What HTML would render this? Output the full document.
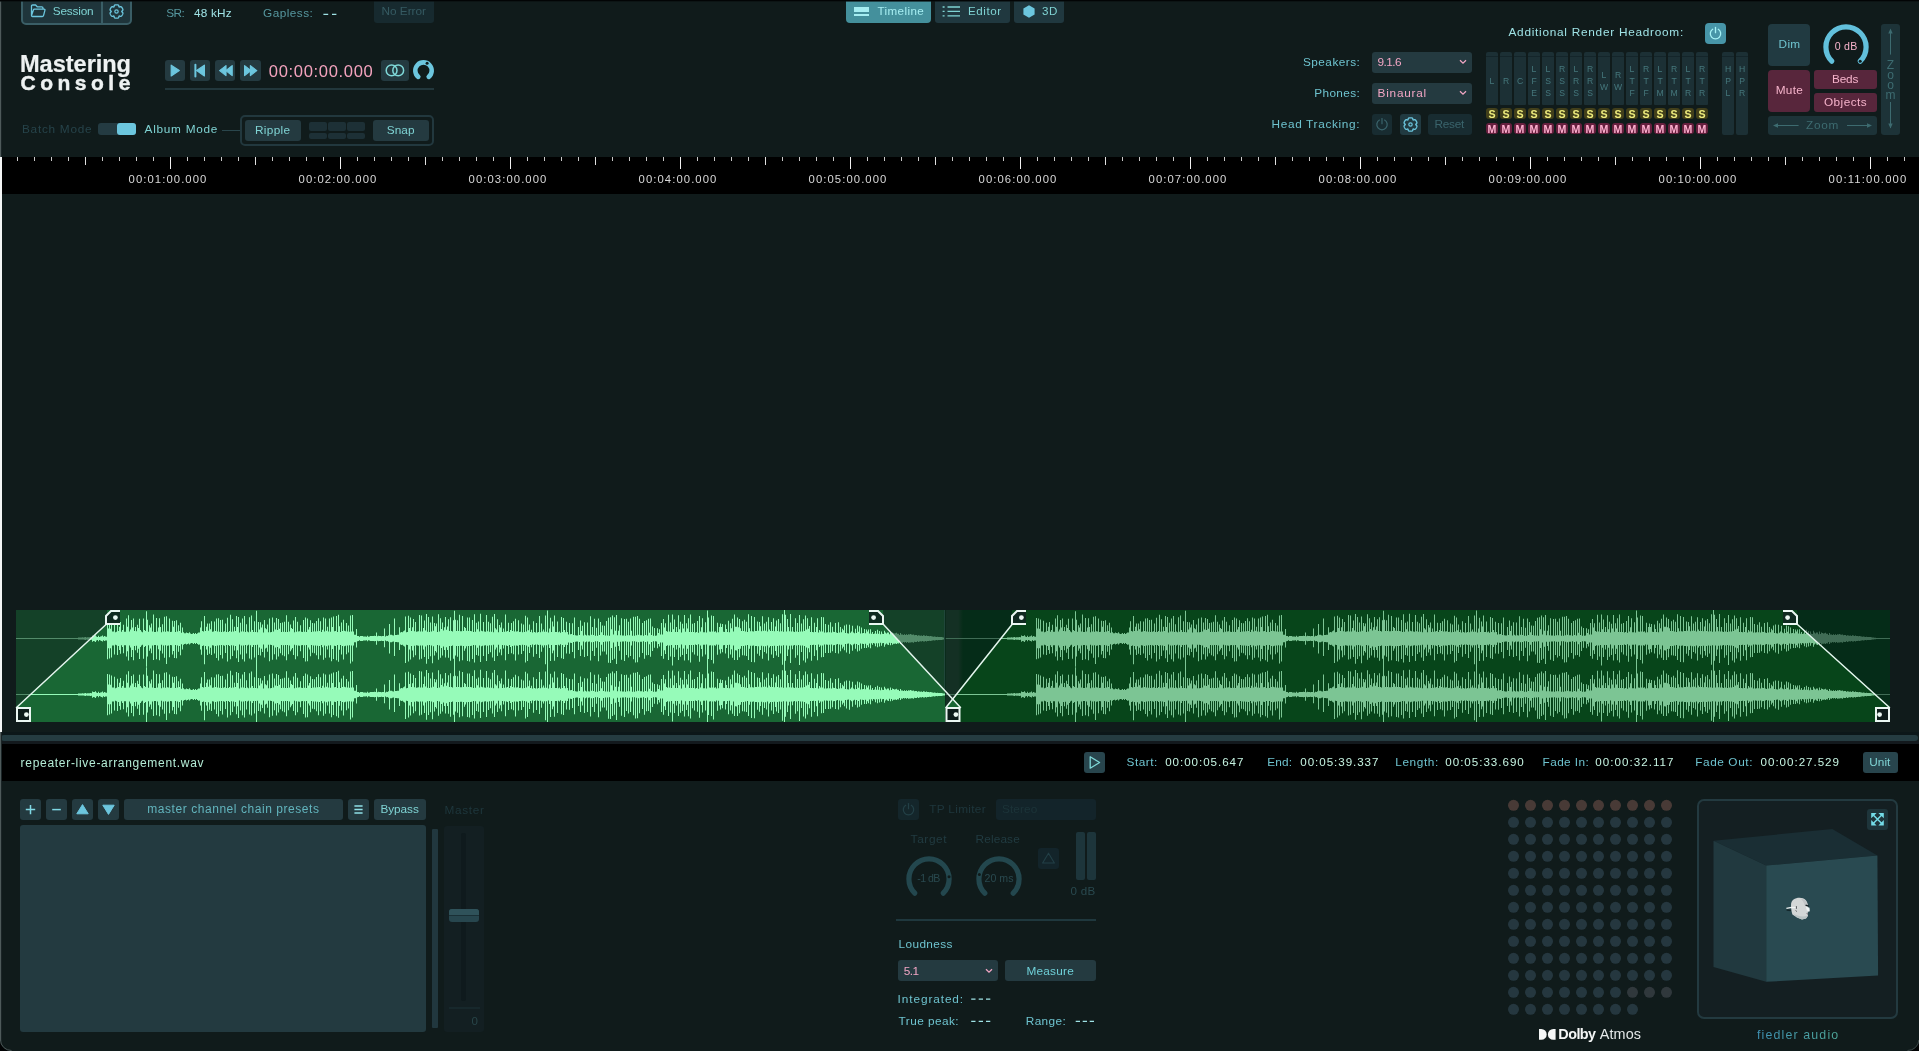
<!DOCTYPE html>
<html><head><meta charset="utf-8">
<style>
*{box-sizing:border-box;margin:0;padding:0}
html,body{width:1919px;height:1051px;overflow:hidden;background:#101b1b}
body{-webkit-font-smoothing:antialiased;font-family:"Liberation Sans",sans-serif;position:relative;color:#6ec3cf;font-size:12px}
.a{position:absolute}
.t{position:absolute;white-space:nowrap;line-height:1}
.btn{position:absolute;background:#243a40;border-radius:3px}
.c{display:flex;align-items:center;justify-content:center}
svg{position:absolute;overflow:visible}
#w{position:absolute;left:0;top:0;width:1919px;height:1051px;will-change:transform}
</style></head><body><div id="w">
<!-- left edge line -->

<!-- Session group -->
<div class="a" style="left:21px;top:-4px;width:111px;height:29px;border:2px solid #3a5e66;border-radius:5px;background:#1f353b"></div>
<div class="a" style="left:101px;top:0;width:2px;height:24px;background:#3a5e66"></div>
<svg style="left:30px;top:4px" width="16" height="14" viewBox="0 0 16 14"><path d="M1.5 11.5V2.2Q1.5 1 2.7 1H5.6L7.2 2.8H11.8Q13 2.8 13 4V5.2M1.5 11.5L3.3 6.2Q3.6 5.2 4.6 5.2H14Q15.2 5.2 14.9 6.3L13.6 11.4Q13.3 12.5 12.2 12.5H2.5Q1.5 12.5 1.5 11.5Z" fill="none" stroke="#6cc6de" stroke-width="1.3" stroke-linejoin="round"></path></svg>
<div class="t" style="left: 52.7px; top: 6.05px; font-size: 11.8px; color: rgb(127, 211, 211); letter-spacing: -0.18px;">Session</div>
<svg style="left:109px;top:4px" width="15" height="15" viewBox="-7.5 -7.5 15 15"><path id="gearp" d="M0.00 -6.70L0.35 -6.69L0.70 -6.66L1.05 -6.61L1.39 -6.54L1.72 -6.41L2.01 -6.18L2.23 -5.80L2.35 -5.29L2.44 -4.79L2.60 -4.50L2.93 -4.51L3.40 -4.68L3.91 -4.83L4.35 -4.83L4.69 -4.69L4.97 -4.47L5.20 -4.21L5.42 -3.94L5.62 -3.65L5.80 -3.35L5.97 -3.04L6.12 -2.72L6.25 -2.40L6.36 -2.07L6.41 -1.72L6.35 -1.35L6.13 -0.97L5.76 -0.61L5.37 -0.28L5.20 -0.00L5.37 0.28L5.76 0.61L6.13 0.97L6.35 1.35L6.41 1.72L6.36 2.07L6.25 2.40L6.12 2.72L5.97 3.04L5.80 3.35L5.62 3.65L5.42 3.94L5.20 4.21L4.97 4.47L4.69 4.69L4.35 4.83L3.91 4.83L3.40 4.68L2.93 4.51L2.60 4.50L2.44 4.79L2.35 5.29L2.23 5.80L2.01 6.18L1.72 6.41L1.39 6.54L1.05 6.61L0.70 6.66L0.35 6.69L0.00 6.70L-0.35 6.69L-0.70 6.66L-1.05 6.61L-1.39 6.54L-1.72 6.41L-2.01 6.18L-2.23 5.80L-2.35 5.29L-2.44 4.79L-2.60 4.50L-2.93 4.51L-3.40 4.68L-3.91 4.83L-4.35 4.83L-4.69 4.69L-4.97 4.47L-5.20 4.21L-5.42 3.94L-5.62 3.65L-5.80 3.35L-5.97 3.04L-6.12 2.72L-6.25 2.40L-6.36 2.07L-6.41 1.72L-6.35 1.35L-6.13 0.97L-5.76 0.61L-5.37 0.28L-5.20 0.00L-5.37 -0.28L-5.76 -0.61L-6.13 -0.97L-6.35 -1.35L-6.41 -1.72L-6.36 -2.07L-6.25 -2.40L-6.12 -2.72L-5.97 -3.04L-5.80 -3.35L-5.62 -3.65L-5.42 -3.94L-5.20 -4.21L-4.97 -4.47L-4.69 -4.69L-4.35 -4.83L-3.91 -4.83L-3.40 -4.68L-2.93 -4.51L-2.60 -4.50L-2.44 -4.79L-2.35 -5.29L-2.23 -5.80L-2.01 -6.18L-1.72 -6.41L-1.39 -6.54L-1.05 -6.61L-0.70 -6.66L-0.35 -6.69Z" fill="none" stroke="#6cc6de" stroke-width="1.35" stroke-linejoin="round"></path><circle r="1.7" fill="none" stroke="#6cc6de" stroke-width="1.2"></circle></svg>

<div class="t" style="left: 166.3px; top: 8.3px; font-size: 11.8px; color: rgb(86, 151, 159); letter-spacing: -0.55px;">SR:</div>
<div class="t" style="left: 194px; top: 8.3px; font-size: 11.8px; color: rgb(159, 227, 230); letter-spacing: 0.18px;">48 kHz</div>
<div class="t" style="left: 263px; top: 8.3px; font-size: 11.8px; color: rgb(86, 151, 159); letter-spacing: 0.46px;">Gapless:</div>
<svg style="left:0;top:0" width="400" height="30"><path d="M323.4 14.3h4.8m3.8 0h4.4" stroke="#9fe3e6" stroke-width="1.3"></path></svg>
<div class="a" style="left:374px;top:-2px;width:60px;height:25px;background:#172a2f;border-radius:3px"></div>
<div class="t" style="left: 381.5px; top: 5.95px; font-size: 11.8px; color: rgb(53, 90, 98); letter-spacing: -0.02px;">No Error</div>

<!-- Logo -->
<div class="t" style="left:20px;top:52.5px;font-size:23.6px;font-weight:bold;color:#eef2f2;letter-spacing:-0.05px;-webkit-text-stroke:0.2px #eef2f2">Mastering</div>
<div class="t" style="left:20.5px;top:71.7px;font-size:21px;font-weight:bold;color:#eef2f2;letter-spacing:4.5px;-webkit-text-stroke:0.45px #eef2f2">Console</div>

<!-- transport -->
<div class="btn" style="left:165px;top:60px;width:20px;height:21px"></div>
<div class="btn" style="left:190px;top:60px;width:20px;height:21px"></div>
<div class="btn" style="left:215px;top:60px;width:20px;height:21px"></div>
<div class="btn" style="left:240px;top:60px;width:21px;height:21px"></div>
<svg style="left:165px;top:60px" width="96" height="21" viewBox="0 0 96 21">
<g fill="#6cc6de" stroke="#6cc6de" stroke-width="1.2" stroke-linejoin="round">
<path d="M6.2 5.2V16L14.3 10.6Z"></path>
<path d="M39.4 5.2V16L31.6 10.6Z"></path><path d="M30.4 4.8V16.4" stroke-width="2" stroke-linecap="round"></path>
<path d="M61 5.6V15.6L54.6 10.6Z"></path><path d="M67.2 5.6V15.6L60.8 10.6Z"></path>
<path d="M79.6 5.6V15.6L86 10.6Z"></path><path d="M85.4 5.6V15.6L91.8 10.6Z"></path>
</g></svg>
<div class="t" style="left: 268.75px; top: 63.95px; font-size: 16.6px; color: rgb(244, 163, 190); letter-spacing: 0.65px;">00:00:00.000</div>
<div class="btn" style="left:381px;top:60px;width:28px;height:21px"></div>
<svg style="left:381px;top:60px" width="28" height="21" viewBox="0 0 28 21"><circle cx="10.6" cy="10.4" r="5.4" fill="none" stroke="#7fd8d8" stroke-width="1.5"></circle><circle cx="17.2" cy="10.4" r="5.4" fill="none" stroke="#7fd8d8" stroke-width="1.5"></circle></svg>
<svg style="left:412px;top:59px" width="23" height="23" viewBox="-11.5 -11.5 23 23"><path d="M-5.2 6.4A8.2 8.2 0 1 1 5.2 6.4" fill="none" stroke="#6cc6de" stroke-width="4.6" stroke-linecap="round"></path><circle cx="3.6" cy="-7.2" r="1.5" fill="#101b1b"></circle></svg>
<div class="a" style="left:165px;top:88px;width:269px;height:2px;background:#22373c"></div>

<!-- mode row -->
<div class="t" style="left: 22px; top: 124.2px; font-size: 11.8px; color: rgb(38, 67, 74); letter-spacing: 0.73px;">Batch Mode</div>
<div class="a" style="left:98px;top:123px;width:38px;height:12px;background:#243b42;border-radius:3px"></div>
<div class="a" style="left:117px;top:123px;width:19px;height:12px;background:#6cc6de;border-radius:3px"></div>
<div class="t" style="left: 144.6px; top: 124.2px; font-size: 11.8px; color: rgb(127, 211, 211); letter-spacing: 0.72px;">Album Mode</div>
<div class="a" style="left:222px;top:130px;width:19px;height:1px;background:#2a464c"></div>
<div class="a" style="left:240px;top:115px;width:194px;height:31px;border:2px solid #22383e;border-radius:5px;background:#101b1b"></div>
<div class="btn" style="left:245px;top:120px;width:56px;height:21px"></div>
<div class="t" style="font-size: 11.8px; color: rgb(127, 211, 211); letter-spacing: 0.32px; left: 255px; top: 125.2px;">Ripple</div>
<div class="btn" style="left:373px;top:120px;width:56px;height:21px"></div>
<div class="t" style="font-size: 11.8px; color: rgb(127, 211, 211); letter-spacing: 0.09px; left: 386.75px; top: 125.2px;">Snap</div>
<div class="a" style="left:309px;top:122px;width:18px;height:9px;background:#1d3036;border-radius:2px"></div>
<div class="a" style="left:328px;top:122px;width:18px;height:9px;background:#1d3036;border-radius:2px"></div>
<div class="a" style="left:347px;top:122px;width:18px;height:9px;background:#1d3036;border-radius:2px"></div>
<div class="a" style="left:309px;top:133px;width:18px;height:6px;background:#1d3036;border-radius:2px"></div>
<div class="a" style="left:328px;top:133px;width:18px;height:6px;background:#1d3036;border-radius:2px"></div>
<div class="a" style="left:347px;top:133px;width:18px;height:6px;background:#1d3036;border-radius:2px"></div>

<!-- tabs -->
<div class="a" style="left:846px;top:-3px;width:85px;height:26px;background:#44909c;border-radius:4px"></div>
<div class="a" style="left:854px;top:7px;width:15px;height:5px;background:#a6eef2"></div>
<div class="a" style="left:854px;top:14px;width:15px;height:2.4px;background:#a6eef2"></div>
<div class="t" style="left: 877.4px; top: 5.2px; font-size: 11.6px; color: rgb(166, 238, 242); letter-spacing: 0.42px;">Timeline</div>
<div class="a" style="left:935px;top:-3px;width:75px;height:26px;background:#20383f;border-radius:3px"></div>
<svg style="left:942px;top:6px" width="18" height="11" viewBox="0 0 18 11"><g stroke="#7fd3d3" stroke-width="1.3"><path d="M5.5 1H18M5.5 5.4H18M5.5 9.8H18"></path><path d="M0.6 1H2.6M0.6 5.4H2.6M0.6 9.8H2.6"></path></g></svg>
<div class="t" style="left: 968px; top: 5.2px; font-size: 11.6px; color: rgb(127, 211, 211); letter-spacing: 0.55px;">Editor</div>
<div class="a" style="left:1014px;top:-3px;width:50px;height:26px;background:#20383f;border-radius:3px"></div>
<svg style="left:1022px;top:5px" width="14" height="13" viewBox="0 0 14 13"><path d="M7 0.3L12.6 3.4V9.6L7 12.7L1.4 9.6V3.4Z" fill="#6cc6de"></path></svg>
<div class="t" style="left: 1042px; top: 5.2px; font-size: 11.6px; color: rgb(127, 211, 211); letter-spacing: 0.55px;">3D</div>

<!-- speakers/phones -->
<div class="t" style="font-size: 11.8px; color: rgb(110, 195, 207); letter-spacing: 0.46px; left: 1303px; top: 57px;">Speakers:</div>
<div class="t" style="font-size: 11.8px; color: rgb(110, 195, 207); letter-spacing: 0.36px; left: 1314.3px; top: 87.6px;">Phones:</div>
<div class="t" style="font-size: 11.8px; color: rgb(110, 195, 207); letter-spacing: 0.67px; left: 1271.5px; top: 118.6px;">Head Tracking:</div>
<div class="btn" style="left:1372px;top:52px;width:100px;height:21px"></div>
<div class="btn" style="left:1372px;top:83px;width:100px;height:21px"></div>
<div class="t" style="font-size: 11.8px; color: rgb(242, 166, 196); letter-spacing: -0.55px; left: 1377.5px; top: 57.4px;">9.1.6</div>
<div class="t" style="font-size: 11.8px; color: rgb(242, 166, 196); letter-spacing: 0.78px; left: 1377.5px; top: 88.3px;">Binaural</div>
<svg style="left:1459px;top:59px" width="8" height="6" viewBox="0 0 8 6"><path d="M1 1.2L4 4.2L7 1.2" fill="none" stroke="#f2a6c4" stroke-width="1.3"></path></svg>
<svg style="left:1459px;top:90px" width="8" height="6" viewBox="0 0 8 6"><path d="M1 1.2L4 4.2L7 1.2" fill="none" stroke="#f2a6c4" stroke-width="1.3"></path></svg>
<div class="btn" style="left:1372px;top:114px;width:20px;height:21px;background:#182c31"></div>
<svg style="left:1372px;top:114px" width="20" height="21" viewBox="-10 -10.5 20 21"><path d="M-2.6 -4.4A5.2 5.2 0 1 0 2.6 -4.4" fill="none" stroke="#3a646c" stroke-width="1.2" stroke-linecap="round"></path><path d="M0 -6V-0.8" stroke="#3a646c" stroke-width="1.2" stroke-linecap="round"></path></svg>
<div class="btn" style="left:1400px;top:114px;width:21px;height:21px;background:#213a41"></div>
<svg style="left:1403px;top:117px" width="15" height="15" viewBox="-7.5 -7.5 15 15"><path d="M0.00 -6.70L0.35 -6.69L0.70 -6.66L1.05 -6.61L1.39 -6.54L1.72 -6.41L2.01 -6.18L2.23 -5.80L2.35 -5.29L2.44 -4.79L2.60 -4.50L2.93 -4.51L3.40 -4.68L3.91 -4.83L4.35 -4.83L4.69 -4.69L4.97 -4.47L5.20 -4.21L5.42 -3.94L5.62 -3.65L5.80 -3.35L5.97 -3.04L6.12 -2.72L6.25 -2.40L6.36 -2.07L6.41 -1.72L6.35 -1.35L6.13 -0.97L5.76 -0.61L5.37 -0.28L5.20 -0.00L5.37 0.28L5.76 0.61L6.13 0.97L6.35 1.35L6.41 1.72L6.36 2.07L6.25 2.40L6.12 2.72L5.97 3.04L5.80 3.35L5.62 3.65L5.42 3.94L5.20 4.21L4.97 4.47L4.69 4.69L4.35 4.83L3.91 4.83L3.40 4.68L2.93 4.51L2.60 4.50L2.44 4.79L2.35 5.29L2.23 5.80L2.01 6.18L1.72 6.41L1.39 6.54L1.05 6.61L0.70 6.66L0.35 6.69L0.00 6.70L-0.35 6.69L-0.70 6.66L-1.05 6.61L-1.39 6.54L-1.72 6.41L-2.01 6.18L-2.23 5.80L-2.35 5.29L-2.44 4.79L-2.60 4.50L-2.93 4.51L-3.40 4.68L-3.91 4.83L-4.35 4.83L-4.69 4.69L-4.97 4.47L-5.20 4.21L-5.42 3.94L-5.62 3.65L-5.80 3.35L-5.97 3.04L-6.12 2.72L-6.25 2.40L-6.36 2.07L-6.41 1.72L-6.35 1.35L-6.13 0.97L-5.76 0.61L-5.37 0.28L-5.20 0.00L-5.37 -0.28L-5.76 -0.61L-6.13 -0.97L-6.35 -1.35L-6.41 -1.72L-6.36 -2.07L-6.25 -2.40L-6.12 -2.72L-5.97 -3.04L-5.80 -3.35L-5.62 -3.65L-5.42 -3.94L-5.20 -4.21L-4.97 -4.47L-4.69 -4.69L-4.35 -4.83L-3.91 -4.83L-3.40 -4.68L-2.93 -4.51L-2.60 -4.50L-2.44 -4.79L-2.35 -5.29L-2.23 -5.80L-2.01 -6.18L-1.72 -6.41L-1.39 -6.54L-1.05 -6.61L-0.70 -6.66L-0.35 -6.69Z" fill="none" stroke="#6cc6de" stroke-width="1.35" stroke-linejoin="round"></path><circle r="1.7" fill="none" stroke="#6cc6de" stroke-width="1.2"></circle></svg>
<div class="btn" style="left:1428px;top:114px;width:44px;height:21px;background:#182c31"></div>
<div class="t" style="font-size: 11.8px; color: rgb(58, 100, 108); letter-spacing: -0.23px; left: 1434.4px; top: 118.95px;">Reset</div>
<div class="t" style="font-size: 11.8px; color: rgb(159, 227, 230); letter-spacing: 0.74px; left: 1508.5px; top: 27.3px;">Additional Render Headroom:</div>
<div class="a" style="left:1705px;top:23px;width:21px;height:21px;background:#4795a8;border-radius:4px"></div>
<svg style="left:1705px;top:23px" width="21" height="21" viewBox="-10.5 -10.5 21 21"><path d="M-2.8 -4.2A5.2 5.2 0 1 0 2.8 -4.2" fill="none" stroke="#a6f2f6" stroke-width="1.3" stroke-linecap="round"></path><path d="M0 -6V-0.8" stroke="#a6f2f6" stroke-width="1.3" stroke-linecap="round"></path></svg>
<div class="a" style="left:1486px;top:52px;width:12px;height:53px;background:#1c3035;border-radius:2px 2px 1px 1px"></div>
<div class="a" style="left:1486px;top:56px;width:12px;height:1px;background:#14252a"></div>
<div class="a c" style="left:1484px;top:75.1px;width:16px;flex-direction:column;font-size:8.6px;line-height:12px;color:#45777c"><span>L</span></div>
<div class="a c" style="left:1486px;top:108px;width:12px;height:11px;background:#423f1a;border-radius:3px;font-size:10.6px;color:#eeec7c;font-weight:bold">S</div>
<div class="a c" style="left:1486px;top:123px;width:12px;height:11px;background:#661f3e;border-radius:3px;font-size:10.6px;color:#ffb0d0;font-weight:bold">M</div>
<div class="a" style="left:1500px;top:52px;width:12px;height:53px;background:#1c3035;border-radius:2px 2px 1px 1px"></div>
<div class="a" style="left:1500px;top:56px;width:12px;height:1px;background:#14252a"></div>
<div class="a c" style="left:1498px;top:75.1px;width:16px;flex-direction:column;font-size:8.6px;line-height:12px;color:#45777c"><span>R</span></div>
<div class="a c" style="left:1500px;top:108px;width:12px;height:11px;background:#423f1a;border-radius:3px;font-size:10.6px;color:#eeec7c;font-weight:bold">S</div>
<div class="a c" style="left:1500px;top:123px;width:12px;height:11px;background:#661f3e;border-radius:3px;font-size:10.6px;color:#ffb0d0;font-weight:bold">M</div>
<div class="a" style="left:1514px;top:52px;width:12px;height:53px;background:#1c3035;border-radius:2px 2px 1px 1px"></div>
<div class="a" style="left:1514px;top:56px;width:12px;height:1px;background:#14252a"></div>
<div class="a c" style="left:1512px;top:75.1px;width:16px;flex-direction:column;font-size:8.6px;line-height:12px;color:#45777c"><span>C</span></div>
<div class="a c" style="left:1514px;top:108px;width:12px;height:11px;background:#423f1a;border-radius:3px;font-size:10.6px;color:#eeec7c;font-weight:bold">S</div>
<div class="a c" style="left:1514px;top:123px;width:12px;height:11px;background:#661f3e;border-radius:3px;font-size:10.6px;color:#ffb0d0;font-weight:bold">M</div>
<div class="a" style="left:1528px;top:52px;width:12px;height:53px;background:#1c3035;border-radius:2px 2px 1px 1px"></div>
<div class="a" style="left:1528px;top:56px;width:12px;height:1px;background:#14252a"></div>
<div class="a c" style="left:1526px;top:63.1px;width:16px;flex-direction:column;font-size:8.6px;line-height:12px;color:#45777c"><span>L</span><span>F</span><span>E</span></div>
<div class="a c" style="left:1528px;top:108px;width:12px;height:11px;background:#423f1a;border-radius:3px;font-size:10.6px;color:#eeec7c;font-weight:bold">S</div>
<div class="a c" style="left:1528px;top:123px;width:12px;height:11px;background:#661f3e;border-radius:3px;font-size:10.6px;color:#ffb0d0;font-weight:bold">M</div>
<div class="a" style="left:1542px;top:52px;width:12px;height:53px;background:#1c3035;border-radius:2px 2px 1px 1px"></div>
<div class="a" style="left:1542px;top:56px;width:12px;height:1px;background:#14252a"></div>
<div class="a c" style="left:1540px;top:63.1px;width:16px;flex-direction:column;font-size:8.6px;line-height:12px;color:#45777c"><span>L</span><span>S</span><span>S</span></div>
<div class="a c" style="left:1542px;top:108px;width:12px;height:11px;background:#423f1a;border-radius:3px;font-size:10.6px;color:#eeec7c;font-weight:bold">S</div>
<div class="a c" style="left:1542px;top:123px;width:12px;height:11px;background:#661f3e;border-radius:3px;font-size:10.6px;color:#ffb0d0;font-weight:bold">M</div>
<div class="a" style="left:1556px;top:52px;width:12px;height:53px;background:#1c3035;border-radius:2px 2px 1px 1px"></div>
<div class="a" style="left:1556px;top:56px;width:12px;height:1px;background:#14252a"></div>
<div class="a c" style="left:1554px;top:63.1px;width:16px;flex-direction:column;font-size:8.6px;line-height:12px;color:#45777c"><span>R</span><span>S</span><span>S</span></div>
<div class="a c" style="left:1556px;top:108px;width:12px;height:11px;background:#423f1a;border-radius:3px;font-size:10.6px;color:#eeec7c;font-weight:bold">S</div>
<div class="a c" style="left:1556px;top:123px;width:12px;height:11px;background:#661f3e;border-radius:3px;font-size:10.6px;color:#ffb0d0;font-weight:bold">M</div>
<div class="a" style="left:1570px;top:52px;width:12px;height:53px;background:#1c3035;border-radius:2px 2px 1px 1px"></div>
<div class="a" style="left:1570px;top:56px;width:12px;height:1px;background:#14252a"></div>
<div class="a c" style="left:1568px;top:63.1px;width:16px;flex-direction:column;font-size:8.6px;line-height:12px;color:#45777c"><span>L</span><span>R</span><span>S</span></div>
<div class="a c" style="left:1570px;top:108px;width:12px;height:11px;background:#423f1a;border-radius:3px;font-size:10.6px;color:#eeec7c;font-weight:bold">S</div>
<div class="a c" style="left:1570px;top:123px;width:12px;height:11px;background:#661f3e;border-radius:3px;font-size:10.6px;color:#ffb0d0;font-weight:bold">M</div>
<div class="a" style="left:1584px;top:52px;width:12px;height:53px;background:#1c3035;border-radius:2px 2px 1px 1px"></div>
<div class="a" style="left:1584px;top:56px;width:12px;height:1px;background:#14252a"></div>
<div class="a c" style="left:1582px;top:63.1px;width:16px;flex-direction:column;font-size:8.6px;line-height:12px;color:#45777c"><span>R</span><span>R</span><span>S</span></div>
<div class="a c" style="left:1584px;top:108px;width:12px;height:11px;background:#423f1a;border-radius:3px;font-size:10.6px;color:#eeec7c;font-weight:bold">S</div>
<div class="a c" style="left:1584px;top:123px;width:12px;height:11px;background:#661f3e;border-radius:3px;font-size:10.6px;color:#ffb0d0;font-weight:bold">M</div>
<div class="a" style="left:1598px;top:52px;width:12px;height:53px;background:#1c3035;border-radius:2px 2px 1px 1px"></div>
<div class="a" style="left:1598px;top:56px;width:12px;height:1px;background:#14252a"></div>
<div class="a c" style="left:1596px;top:69.1px;width:16px;flex-direction:column;font-size:8.6px;line-height:12px;color:#45777c"><span>L</span><span>W</span></div>
<div class="a c" style="left:1598px;top:108px;width:12px;height:11px;background:#423f1a;border-radius:3px;font-size:10.6px;color:#eeec7c;font-weight:bold">S</div>
<div class="a c" style="left:1598px;top:123px;width:12px;height:11px;background:#661f3e;border-radius:3px;font-size:10.6px;color:#ffb0d0;font-weight:bold">M</div>
<div class="a" style="left:1612px;top:52px;width:12px;height:53px;background:#1c3035;border-radius:2px 2px 1px 1px"></div>
<div class="a" style="left:1612px;top:56px;width:12px;height:1px;background:#14252a"></div>
<div class="a c" style="left:1610px;top:69.1px;width:16px;flex-direction:column;font-size:8.6px;line-height:12px;color:#45777c"><span>R</span><span>W</span></div>
<div class="a c" style="left:1612px;top:108px;width:12px;height:11px;background:#423f1a;border-radius:3px;font-size:10.6px;color:#eeec7c;font-weight:bold">S</div>
<div class="a c" style="left:1612px;top:123px;width:12px;height:11px;background:#661f3e;border-radius:3px;font-size:10.6px;color:#ffb0d0;font-weight:bold">M</div>
<div class="a" style="left:1626px;top:52px;width:12px;height:53px;background:#1c3035;border-radius:2px 2px 1px 1px"></div>
<div class="a" style="left:1626px;top:56px;width:12px;height:1px;background:#14252a"></div>
<div class="a c" style="left:1624px;top:63.1px;width:16px;flex-direction:column;font-size:8.6px;line-height:12px;color:#45777c"><span>L</span><span>T</span><span>F</span></div>
<div class="a c" style="left:1626px;top:108px;width:12px;height:11px;background:#423f1a;border-radius:3px;font-size:10.6px;color:#eeec7c;font-weight:bold">S</div>
<div class="a c" style="left:1626px;top:123px;width:12px;height:11px;background:#661f3e;border-radius:3px;font-size:10.6px;color:#ffb0d0;font-weight:bold">M</div>
<div class="a" style="left:1640px;top:52px;width:12px;height:53px;background:#1c3035;border-radius:2px 2px 1px 1px"></div>
<div class="a" style="left:1640px;top:56px;width:12px;height:1px;background:#14252a"></div>
<div class="a c" style="left:1638px;top:63.1px;width:16px;flex-direction:column;font-size:8.6px;line-height:12px;color:#45777c"><span>R</span><span>T</span><span>F</span></div>
<div class="a c" style="left:1640px;top:108px;width:12px;height:11px;background:#423f1a;border-radius:3px;font-size:10.6px;color:#eeec7c;font-weight:bold">S</div>
<div class="a c" style="left:1640px;top:123px;width:12px;height:11px;background:#661f3e;border-radius:3px;font-size:10.6px;color:#ffb0d0;font-weight:bold">M</div>
<div class="a" style="left:1654px;top:52px;width:12px;height:53px;background:#1c3035;border-radius:2px 2px 1px 1px"></div>
<div class="a" style="left:1654px;top:56px;width:12px;height:1px;background:#14252a"></div>
<div class="a c" style="left:1652px;top:63.1px;width:16px;flex-direction:column;font-size:8.6px;line-height:12px;color:#45777c"><span>L</span><span>T</span><span>M</span></div>
<div class="a c" style="left:1654px;top:108px;width:12px;height:11px;background:#423f1a;border-radius:3px;font-size:10.6px;color:#eeec7c;font-weight:bold">S</div>
<div class="a c" style="left:1654px;top:123px;width:12px;height:11px;background:#661f3e;border-radius:3px;font-size:10.6px;color:#ffb0d0;font-weight:bold">M</div>
<div class="a" style="left:1668px;top:52px;width:12px;height:53px;background:#1c3035;border-radius:2px 2px 1px 1px"></div>
<div class="a" style="left:1668px;top:56px;width:12px;height:1px;background:#14252a"></div>
<div class="a c" style="left:1666px;top:63.1px;width:16px;flex-direction:column;font-size:8.6px;line-height:12px;color:#45777c"><span>R</span><span>T</span><span>M</span></div>
<div class="a c" style="left:1668px;top:108px;width:12px;height:11px;background:#423f1a;border-radius:3px;font-size:10.6px;color:#eeec7c;font-weight:bold">S</div>
<div class="a c" style="left:1668px;top:123px;width:12px;height:11px;background:#661f3e;border-radius:3px;font-size:10.6px;color:#ffb0d0;font-weight:bold">M</div>
<div class="a" style="left:1682px;top:52px;width:12px;height:53px;background:#1c3035;border-radius:2px 2px 1px 1px"></div>
<div class="a" style="left:1682px;top:56px;width:12px;height:1px;background:#14252a"></div>
<div class="a c" style="left:1680px;top:63.1px;width:16px;flex-direction:column;font-size:8.6px;line-height:12px;color:#45777c"><span>L</span><span>T</span><span>R</span></div>
<div class="a c" style="left:1682px;top:108px;width:12px;height:11px;background:#423f1a;border-radius:3px;font-size:10.6px;color:#eeec7c;font-weight:bold">S</div>
<div class="a c" style="left:1682px;top:123px;width:12px;height:11px;background:#661f3e;border-radius:3px;font-size:10.6px;color:#ffb0d0;font-weight:bold">M</div>
<div class="a" style="left:1696px;top:52px;width:12px;height:53px;background:#1c3035;border-radius:2px 2px 1px 1px"></div>
<div class="a" style="left:1696px;top:56px;width:12px;height:1px;background:#14252a"></div>
<div class="a c" style="left:1694px;top:63.1px;width:16px;flex-direction:column;font-size:8.6px;line-height:12px;color:#45777c"><span>R</span><span>T</span><span>R</span></div>
<div class="a c" style="left:1696px;top:108px;width:12px;height:11px;background:#423f1a;border-radius:3px;font-size:10.6px;color:#eeec7c;font-weight:bold">S</div>
<div class="a c" style="left:1696px;top:123px;width:12px;height:11px;background:#661f3e;border-radius:3px;font-size:10.6px;color:#ffb0d0;font-weight:bold">M</div>
<div class="a" style="left:1722px;top:52px;width:12px;height:83px;background:#1c3035;border-radius:2px"></div>
<div class="a" style="left:1722px;top:56px;width:12px;height:1px;background:#14252a"></div>
<div class="a c" style="left:1720px;top:62.9px;width:16px;flex-direction:column;font-size:8.6px;line-height:12px;color:#45777c"><span>H</span><span>P</span><span>L</span></div>
<div class="a" style="left:1736px;top:52px;width:12px;height:83px;background:#1c3035;border-radius:2px"></div>
<div class="a" style="left:1736px;top:56px;width:12px;height:1px;background:#14252a"></div>
<div class="a c" style="left:1734px;top:62.9px;width:16px;flex-direction:column;font-size:8.6px;line-height:12px;color:#45777c"><span>H</span><span>P</span><span>R</span></div>
<div class="btn" style="left:1768px;top:24px;width:42px;height:42px;background:#213a41;border-radius:4px"></div>
<div class="btn" style="left:1768px;top:70px;width:42px;height:42px;background:#58263c;border-radius:4px"></div>
<div class="btn" style="left:1814px;top:70px;width:63px;height:19px;background:#58263c"></div>
<div class="btn" style="left:1814px;top:93px;width:63px;height:19px;background:#58263c"></div>
<div class="btn" style="left:1768px;top:116px;width:109px;height:19px;background:#1d3338"></div>
<div class="t" style="font-size: 11.8px; color: rgb(110, 195, 207); letter-spacing: 0.28px; left: 1778.6px; top: 39px;">Dim</div>
<div class="t" style="font-size: 11.8px; color: rgb(246, 179, 203); letter-spacing: 0.31px; left: 1775.7px; top: 85.4px;">Mute</div>
<div class="t" style="font-size: 11.8px; color: rgb(246, 179, 203); letter-spacing: -0.13px; left: 1831.9px; top: 74.1px;">Beds</div>
<div class="t" style="font-size: 11.8px; color: rgb(246, 179, 203); letter-spacing: 0.48px; left: 1823.9px; top: 97.3px;">Objects</div>
<div class="t" style="font-size: 11.8px; color: rgb(61, 107, 112); letter-spacing: 0.76px; left: 1806px; top: 119.8px;">Zoom</div>
<svg style="left:1768px;top:116px" width="109" height="19" viewBox="0 0 109 19"><path d="M6 9.5H30.6M79 9.5H103" stroke="#3d6b70" stroke-width="1" fill="none"></path><path d="M5 9.5L10 7.3V11.7Z M104 9.5L99 7.3V11.7Z" fill="#3d6b70"></path></svg>
<div class="btn" style="left:1881px;top:24px;width:19px;height:111px;background:#1d3338"></div>
<div class="a c" style="left:1881px;top:59.8px;width:19px;flex-direction:column;font-size:12px;line-height:10.1px;color:#3d6b70"><span>Z</span><span>o</span><span>o</span><span>m</span></div>
<svg style="left:1881px;top:24px" width="19" height="111" viewBox="0 0 19 111"><path d="M9.5 6V30.6M9.5 78V104" stroke="#3d6b70" stroke-width="1"></path><path d="M9.5 4.4L7.3 9.4H11.7Z M9.5 104.6L7.3 99.6H11.7Z" fill="#3d6b70"></path></svg>
<svg style="left:1822px;top:23px" width="48" height="48" viewBox="-24 -24 48 48"><path d="M-14.2 14.2A20.1 20.1 0 1 1 14.2 14.2" fill="none" stroke="#62c0dc" stroke-width="5.2" stroke-linecap="round"></path><circle cx="14.2" cy="14.2" r="1.5" fill="#101b1b"></circle></svg>
<div class="t" style="font-size: 10.6px; color: rgb(246, 179, 203); letter-spacing: 0.22px; left: 1834.8px; top: 41.2px;">0 dB</div>

<!-- ruler -->
<div class="a" style="left:0;top:157px;width:1919px;height:37px;background:#000"></div>
<svg style="left:0;top:0" width="1919" height="200"><path d="M17.5 157V161M34.5 157V161M51.5 157V161M68.5 157V161M102.5 157V161M119.5 157V161M136.5 157V161M153.5 157V161M187.5 157V161M204.5 157V161M221.5 157V161M238.5 157V161M272.5 157V161M289.5 157V161M306.5 157V161M323.5 157V161M357.5 157V161M374.5 157V161M391.5 157V161M408.5 157V161M442.5 157V161M459.5 157V161M476.5 157V161M493.5 157V161M527.5 157V161M544.5 157V161M561.5 157V161M578.5 157V161M612.5 157V161M629.5 157V161M646.5 157V161M663.5 157V161M697.5 157V161M714.5 157V161M731.5 157V161M748.5 157V161M782.5 157V161M799.5 157V161M816.5 157V161M833.5 157V161M867.5 157V161M884.5 157V161M901.5 157V161M918.5 157V161M952.5 157V161M969.5 157V161M986.5 157V161M1003.5 157V161M1037.5 157V161M1054.5 157V161M1071.5 157V161M1088.5 157V161M1122.5 157V161M1139.5 157V161M1156.5 157V161M1173.5 157V161M1207.5 157V161M1224.5 157V161M1241.5 157V161M1258.5 157V161M1292.5 157V161M1309.5 157V161M1326.5 157V161M1343.5 157V161M1377.5 157V161M1394.5 157V161M1411.5 157V161M1428.5 157V161M1462.5 157V161M1479.5 157V161M1496.5 157V161M1513.5 157V161M1547.5 157V161M1564.5 157V161M1581.5 157V161M1598.5 157V161M1632.5 157V161M1649.5 157V161M1666.5 157V161M1683.5 157V161M1717.5 157V161M1734.5 157V161M1751.5 157V161M1768.5 157V161M1802.5 157V161M1819.5 157V161M1836.5 157V161M1853.5 157V161M1887.5 157V161M1904.5 157V161" stroke="#c8c8c8" stroke-width="1"></path><path d="M85.5 157V165M255.5 157V165M425.5 157V165M595.5 157V165M765.5 157V165M935.5 157V165M1105.5 157V165M1275.5 157V165M1445.5 157V165M1615.5 157V165M1785.5 157V165" stroke="#e0e0e0" stroke-width="1"></path><path d="M170.5 157V169M340.5 157V169M510.5 157V169M680.5 157V169M850.5 157V169M1020.5 157V169M1190.5 157V169M1360.5 157V169M1530.5 157V169M1700.5 157V169M1870.5 157V169" stroke="#f0f0f0" stroke-width="1"></path></svg>
<div class="t" style="font-size: 11.3px; color: rgb(216, 216, 216); letter-spacing: 1.07px; left: 128.6px; top: 174.4px;">00:01:00.000</div>
<div class="t" style="font-size: 11.3px; color: rgb(216, 216, 216); letter-spacing: 1.07px; left: 298.6px; top: 174.4px;">00:02:00.000</div>
<div class="t" style="font-size: 11.3px; color: rgb(216, 216, 216); letter-spacing: 1.07px; left: 468.6px; top: 174.4px;">00:03:00.000</div>
<div class="t" style="font-size: 11.3px; color: rgb(216, 216, 216); letter-spacing: 1.07px; left: 638.6px; top: 174.4px;">00:04:00.000</div>
<div class="t" style="font-size: 11.3px; color: rgb(216, 216, 216); letter-spacing: 1.07px; left: 808.6px; top: 174.4px;">00:05:00.000</div>
<div class="t" style="font-size: 11.3px; color: rgb(216, 216, 216); letter-spacing: 1.07px; left: 978.6px; top: 174.4px;">00:06:00.000</div>
<div class="t" style="font-size: 11.3px; color: rgb(216, 216, 216); letter-spacing: 1.07px; left: 1148.6px; top: 174.4px;">00:07:00.000</div>
<div class="t" style="font-size: 11.3px; color: rgb(216, 216, 216); letter-spacing: 1.07px; left: 1318.6px; top: 174.4px;">00:08:00.000</div>
<div class="t" style="font-size: 11.3px; color: rgb(216, 216, 216); letter-spacing: 1.07px; left: 1488.6px; top: 174.4px;">00:09:00.000</div>
<div class="t" style="font-size: 11.3px; color: rgb(216, 216, 216); letter-spacing: 1.07px; left: 1658.6px; top: 174.4px;">00:10:00.000</div>
<div class="t" style="font-size: 11.3px; color: rgb(216, 216, 216); letter-spacing: 1.14px; left: 1828.6px; top: 174.4px;">00:11:00.000</div>

<!-- clips -->
<svg style="left:0;top:610px" width="1919" height="112" viewBox="0 0 1919 112">
<defs><path id="wv" d="M0 28.0H1V28.0H2V28.0H3V28.0H4V28.0H5V28.0H6V28.0H7V28.0H8V28.0H9V28.0H10V28.0H11V28.0H12V28.0H13V28.0H14V28.0H15V28.0H16V28.0H17V28.0H18V28.0H19V28.0H20V28.0H21V28.0H22V28.0H23V28.0H24V28.0H25V28.0H26V28.0H27V28.0H28V28.0H29V28.0H30V28.0H31V28.0H32V28.0H33V28.0H34V28.0H35V28.0H36V28.0H37V28.0H38V28.0H39V28.0H40V28.0H41V28.0H42V28.0H43V28.0H44V28.0H45V28.0H46V28.0H47V28.0H48V28.0H49V28.0H50V28.0H51V28.0H52V28.0H53V28.0H54V28.0H55V28.0H56V28.0H57V28.0H58V28.0H59V28.0H60V28.0H61V28.0H62V27.4H63V27.5H64V27.4H65V27.4H66V27.3H67V27.5H68V27.3H69V27.1H70V27.4H71V27.2H72V27.2H73V27.3H74V27.1H75V27.3H76V25.5H77V25.9H78V25.9H79V25.3H80V26.5H81V27.0H82V25.7H83V26.9H84V26.5H85V26.2H86V25.4H87V26.8H88V25.9H89V26.5H90V26.7H91V7.9H92V18.6H93V8.6H94V18.8H95V9.4H96V21.6H97V21.6H98V10.7H99V22.3H100V21.7H101V12.7H102V21.0H103V16.7H104V11.9H105V21.8H106V19.9H107V14.8H108V21.8H109V21.8H110V8.6H111V16.8H112V5.3H113V21.6H114V19.5H115V10.1H116V17.5H117V8.4H118V21.0H119V17.1H120V21.2H121V14.7H122V18.1H123V8.8H124V20.0H125V21.5H126V22.3H127V8.6H128V19.9H129V21.0H130V1.2H131V9.8H132V21.7H133V15.2H134V17.6H135V13.6H136V21.5H137V4.4H138V22.1H139V21.9H140V8.0H141V21.4H142V17.6H143V8.2H144V17.0H145V22.2H146V14.2H147V21.5H148V6.8H149V21.8H150V6.2H151V21.2H152V21.5H153V8.6H154V21.9H155V21.7H156V10.7H157V16.7H158V11.0H159V22.0H160V10.2H161V21.6H162V15.3H163V20.9H164V12.7H165V22.8H166V17.6H167V22.2H168V23.2H169V23.3H170V22.6H171V22.9H172V23.3H173V22.3H174V23.6H175V23.9H176V23.8H177V23.1H178V24.1H179V22.9H180V23.9H181V23.3H182V22.5H183V22.4H184V17.4H185V11.2H186V21.1H187V21.5H188V5.9H189V21.0H190V16.8H191V13.5H192V20.7H193V13.4H194V19.2H195V11.3H196V21.8H197V21.4H198V11.6H199V21.0H200V8.6H201V21.5H202V8.2H203V21.7H204V10.0H205V21.9H206V9.7H207V21.7H208V21.2H209V13.5H210V21.9H211V7.8H212V22.0H213V20.9H214V4.8H215V21.7H216V9.2H217V21.6H218V16.8H219V21.0H220V5.9H221V17.0H222V6.9H223V22.4H224V12.7H225V21.5H226V8.4H227V21.6H228V5.9H229V21.9H230V14.3H231V21.6H232V22.3H233V7.3H234V21.8H235V5.5H236V20.1H237V21.9H238V11.2H239V22.0H240V0.8H241V22.2H242V12.0H243V19.5H244V12.3H245V17.5H246V14.4H247V22.6H248V10.0H249V18.2H250V19.2H251V14.5H252V22.2H253V8.5H254V22.2H255V22.0H256V7.4H257V21.5H258V12.6H259V19.5H260V8.1H261V19.9H262V9.1H263V18.7H264V12.9H265V21.9H266V12.4H267V21.8H268V11.8H269V22.1H270V5.3H271V21.9H272V11.7H273V21.6H274V14.4H275V18.0H276V19.1H277V10.4H278V22.3H279V7.1H280V21.8H281V11.7H282V21.5H283V21.2H284V15.2H285V21.8H286V22.1H287V10.1H288V21.8H289V7.6H290V22.1H291V8.5H292V19.4H293V17.0H294V10.2H295V21.9H296V12.9H297V21.6H298V13.2H299V21.6H300V11.0H301V21.3H302V8.2H303V21.1H304V11.3H305V21.9H306V19.7H307V7.4H308V21.5H309V8.4H310V20.8H311V16.8H312V21.5H313V8.6H314V21.7H315V7.4H316V17.1H317V6.6H318V21.3H319V21.0H320V6.0H321V22.0H322V4.7H323V16.3H324V21.9H325V12.6H326V21.1H327V9.7H328V20.8H329V21.2H330V13.0H331V21.4H332V15.6H333V21.8H334V5.6H335V21.6H336V5.0H337V21.4H338V24.7H339V24.8H340V19.1H341V25.9H342V25.9H343V26.7H344V26.0H345V26.0H346V26.1H347V26.6H348V26.5H349V26.4H350V26.7H351V25.8H352V26.7H353V26.4H354V26.0H355V26.0H356V26.1H357V26.0H358V25.8H359V26.1H360V22.5H361V26.2H362V25.8H363V25.9H364V26.0H365V26.2H366V26.0H367V25.9H368V18.4H369V26.4H370V25.8H371V26.1H372V25.3H373V13.9H374V24.8H375V24.7H376V25.2H377V25.4H378V8.5H379V25.1H380V25.1H381V24.8H382V24.8H383V17.2H384V22.4H385V22.1H386V22.2H387V21.3H388V20.5H389V6.4H390V22.3H391V22.0H392V5.7H393V18.0H394V7.6H395V20.9H396V17.3H397V9.1H398V21.2H399V12.0H400V21.8H401V21.6H402V21.3H403V5.1H404V21.4H405V5.6H406V21.5H407V18.0H408V10.6H409V20.6H410V4.1H411V21.7H412V7.0H413V21.9H414V12.4H415V21.4H416V6.6H417V20.8H418V12.9H419V16.3H420V13.6H421V22.1H422V4.2H423V21.4H424V8.3H425V18.9H426V12.6H427V20.6H428V17.3H429V7.1H430V19.7H431V16.5H432V9.2H433V21.0H434V7.2H435V20.9H436V21.4H437V10.2H438V0.7H439V9.7H440V21.1H441V10.2H442V20.9H443V4.7H444V21.2H445V21.2H446V5.9H447V21.1H448V17.1H449V18.1H450V20.8H451V7.6H452V21.1H453V7.6H454V20.9H455V21.2H456V10.1H457V22.0H458V4.2H459V21.7H460V12.7H461V19.3H462V11.5H463V21.5H464V3.7H465V20.7H466V21.2H467V12.1H468V21.4H469V21.7H470V5.0H471V21.3H472V11.8H473V21.7H474V13.3H475V21.7H476V6.7H477V22.3H478V4.0H479V18.2H480V19.6H481V9.3H482V22.2H483V15.0H484V17.4H485V12.5H486V21.9H487V18.6H488V21.8H489V4.5H490V21.6H491V21.1H492V12.8H493V22.1H494V20.0H495V13.1H496V21.0H497V11.3H498V21.6H499V8.7H500V21.5H501V21.3H502V10.2H503V21.9H504V21.8H505V13.5H506V22.2H507V14.4H508V21.9H509V5.7H510V21.4H511V7.4H512V20.3H513V14.4H514V21.9H515V19.7H516V22.4H517V11.3H518V22.1H519V22.5H520V13.0H521V22.6H522V21.9H523V6.1H524V22.2H525V13.6H526V21.6H527V19.4H528V21.7H529V5.6H530V21.7H531V0.6H532V22.4H533V18.4H534V7.7H535V22.0H536V11.5H537V16.5H538V5.6H539V21.9H540V21.9H541V11.6H542V22.3H543V21.6H544V22.7H545V6.9H546V22.0H547V8.0H548V19.9H549V22.2H550V11.7H551V21.9H552V24.5H553V12.9H554V24.2H555V23.9H556V13.2H557V24.9H558V7.6H559V25.2H560V25.5H561V25.4H562V17.1H563V25.1H564V10.4H565V20.9H566V15.7H567V25.5H568V12.2H569V24.8H570V25.5H571V12.5H572V25.3H573V25.4H574V6.3H575V24.8H576V16.9H577V25.0H578V8.8H579V25.8H580V17.8H581V25.7H582V8.4H583V24.9H584V11.9H585V22.3H586V15.5H587V25.1H588V15.7H589V25.5H590V11.1H591V25.5H592V7.8H593V25.7H594V7.3H595V19.3H596V5.6H597V24.6H598V7.2H599V20.8H600V5.0H601V25.2H602V20.7H603V15.3H604V25.2H605V8.3H606V25.6H607V25.5H608V9.1H609V25.7H610V8.8H611V25.2H612V11.8H613V25.3H614V8.6H615V20.8H616V25.7H617V6.8H618V25.7H619V6.8H620V25.2H621V6.0H622V24.8H623V8.7H624V25.3H625V25.2H626V12.9H627V25.8H628V10.9H629V25.0H630V10.3H631V25.6H632V8.7H633V22.8H634V8.4H635V25.0H636V16.6H637V25.7H638V18.1H639V25.8H640V25.4H641V18.3H642V23.0H643V19.2H644V24.4H645V13.0H646V24.4H647V8.9H648V17.6H649V13.2H650V21.0H651V21.7H652V4.8H653V21.6H654V12.4H655V22.1H656V4.5H657V19.3H658V9.6H659V22.1H660V16.9H661V21.9H662V5.3H663V19.2H664V11.7H665V22.4H666V13.7H667V18.5H668V4.9H669V21.7H670V13.3H671V18.4H672V8.2H673V22.1H674V4.4H675V21.9H676V13.8H677V22.0H678V13.1H679V22.5H680V21.9H681V11.1H682V22.7H683V6.0H684V21.5H685V17.3H686V8.2H687V22.2H688V22.2H689V12.2H690V22.4H691V0.5H692V7.6H693V21.6H694V21.8H695V5.6H696V21.5H697V6.0H698V21.8H699V21.2H700V22.6H701V12.7H702V22.3H703V16.9H704V13.5H705V17.1H706V14.1H707V21.7H708V22.1H709V14.4H710V19.1H711V21.9H712V10.7H713V22.3H714V13.3H715V18.2H716V8.7H717V21.6H718V4.6H719V16.7H720V16.7H721V7.6H722V17.3H723V9.1H724V18.3H725V20.9H726V11.3H727V21.1H728V9.8H729V21.6H730V11.7H731V21.9H732V4.3H733V18.2H734V21.2H735V6.1H736V21.3H737V21.4H738V7.1H739V21.1H740V20.9H741V11.5H742V20.8H743V12.0H744V16.3H745V21.2H746V6.2H747V20.7H748V13.6H749V20.7H750V11.8H751V21.5H752V7.3H753V19.6H754V21.1H755V12.1H756V21.1H757V8.2H758V21.3H759V16.6H760V10.4H761V20.9H762V9.0H763V21.5H764V13.2H765V21.2H766V4.3H767V21.7H768V-0.2H769V4.7H770V21.5H771V9.1H772V17.1H773V21.3H774V3.9H775V21.5H776V17.0H777V21.4H778V22.0H779V8.2H780V21.6H781V13.0H782V21.9H783V4.9H784V21.6H785V13.5H786V21.5H787V9.2H788V21.1H789V5.4H790V19.4H791V8.3H792V18.7H793V15.9H794V21.9H795V7.3H796V22.1H797V22.2H798V12.8H799V21.9H800V17.0H801V8.2H802V22.4H803V19.9H804V21.5H805V7.1H806V21.5H807V7.2H808V22.5H809V14.0H810V22.5H811V22.2H812V14.7H813V22.2H814V12.2H815V22.5H816V16.8H817V21.7H818V22.1H819V13.1H820V22.4H821V23.0H822V12.2H823V22.5H824V16.9H825V22.3H826V18.8H827V20.2H828V15.5H829V22.9H830V14.6H831V23.2H832V23.4H833V14.8H834V22.8H835V21.5H836V15.7H837V22.4H838V23.3H839V18.8H840V23.0H841V15.6H842V21.7H843V16.2H844V23.6H845V17.5H846V23.3H847V22.9H848V18.9H849V23.3H850V19.5H851V21.5H852V19.6H853V23.6H854V19.2H855V23.8H856V21.9H857V23.9H858V23.5H859V21.1H860V23.7H861V19.7H862V23.8H863V20.9H864V24.2H865V21.4H866V23.8H867V24.0H868V20.7H869V22.5H870V23.4H871V22.5H872V22.4H873V24.2H874V21.6H875V24.1H876V22.4H877V23.1H878V23.4H879V23.3H880V22.8H881V23.8H882V23.8H883V25.0H884V22.9H885V24.6H886V24.4H887V25.0H888V24.3H889V25.1H890V24.2H891V24.9H892V24.2H893V24.5H894V24.1H895V24.6H896V24.8H897V24.4H898V25.3H899V25.1H900V25.0H901V25.8H902V25.2H903V25.4H904V25.7H905V25.4H906V26.0H907V25.3H908V25.6H909V25.9H910V25.5H911V25.9H912V26.0H913V26.3H914V25.9H915V26.2H916V26.4H917V26.7H918V26.6H919V26.8H920V27.0H921V26.7H922V27.0H923V27.1H924V26.9H925V27.1H926V27.3H927V27.4H928V27.5H929V27.7H930V27.8H931V27.9H932V28.0H933V28.0H934V28.0H935V28.0H936V28.0H937V28.0H938V28.0H939V28.0H940V28.0H941V28.0H942V28.0H943V28.0H944V28.0H945V28.0H946V29.0H945V29.0H944V29.0H943V29.0H942V29.0H941V29.0H940V29.0H939V29.0H938V29.0H937V29.0H936V29.0H935V29.0H934V29.0H933V29.0H932V29.1H931V29.2H930V29.3H929V29.5H928V29.6H927V29.7H926V29.9H925V30.1H924V29.9H923V30.0H922V30.2H921V30.0H920V30.2H919V30.5H918V30.3H917V30.6H916V30.7H915V31.1H914V30.7H913V31.0H912V31.1H911V31.5H910V31.1H909V31.4H908V31.6H907V31.0H906V31.5H905V31.3H904V31.6H903V31.9H902V31.2H901V32.1H900V32.0H899V31.7H898V32.7H897V32.3H896V32.3H895V32.6H894V32.5H893V32.8H892V32.0H891V32.7H890V31.9H889V32.6H888V32.0H887V32.7H886V32.4H885V34.1H884V32.0H883V33.4H882V33.2H881V34.0H880V33.5H879V33.8H878V33.8H877V34.8H876V32.9H875V35.3H874V32.8H873V34.9H872V34.4H871V33.6H870V34.6H869V36.7H868V33.0H867V33.2H866V35.8H865V32.8H864V36.5H863V33.2H862V37.2H861V33.3H860V36.2H859V33.5H858V33.1H857V34.7H856V33.2H855V38.2H854V33.4H853V37.3H852V35.2H851V38.1H850V33.7H849V37.9H848V34.1H847V33.7H846V38.7H845V33.4H844V40.8H843V35.1H842V41.6H841V34.0H840V38.7H839V33.7H838V34.6H837V40.7H836V35.2H835V34.2H834V43.8H833V33.6H832V33.8H831V42.6H830V34.1H829V40.3H828V36.8H827V38.6H826V34.7H825V41.2H824V34.5H823V43.4H822V34.0H821V34.6H820V43.1H819V34.9H818V35.3H817V41.2H816V34.5H815V42.8H814V34.8H813V43.0H812V34.8H811V34.5H810V43.0H809V34.5H808V46.9H807V35.5H806V47.3H805V35.5H804V37.1H803V34.6H802V50.3H801V40.2H800V35.1H799V46.0H798V34.8H797V34.9H796V50.7H795V35.1H794V42.2H793V38.3H792V48.6H791V37.6H790V52.5H789V35.9H788V50.4H787V35.5H786V42.1H785V35.4H784V55.1H783V35.1H782V45.2H781V35.4H780V47.8H779V35.0H778V35.6H777V39.3H776V35.5H775V52.9H774V35.7H773V39.5H772V45.9H771V35.5H770V50.7H769V58.1H768V35.3H767V54.8H766V35.8H765V43.5H764V35.5H763V47.0H762V36.1H761V45.4H760V41.0H759V35.7H758V47.9H757V35.9H756V44.4H755V35.9H754V37.4H753V50.5H752V35.5H751V43.5H750V36.3H749V42.0H748V36.3H747V48.8H746V35.8H745V40.0H744V45.8H743V36.2H742V43.8H741V36.1H740V35.9H739V52.2H738V35.6H737V35.7H736V52.1H735V35.8H734V38.7H733V50.0H732V35.1H731V46.1H730V35.4H729V45.4H728V35.9H727V45.2H726V36.1H725V38.7H724V47.3H723V38.9H722V49.9H721V40.4H720V40.3H719V49.9H718V35.4H717V47.8H716V39.2H715V44.6H714V34.7H713V48.2H712V35.1H711V37.9H710V43.6H709V34.9H708V35.3H707V42.3H706V38.9H705V43.4H704V39.4H703V34.7H702V44.8H701V34.4H700V35.8H699V35.2H698V53.4H697V35.5H696V49.9H695V35.2H694V35.4H693V49.1H692V57.4H691V34.6H690V44.5H689V34.8H688V34.8H687V46.5H686V39.0H685V35.5H684V51.7H683V34.3H682V45.7H681V35.1H680V34.5H679V44.6H678V35.0H677V42.3H676V35.1H675V52.4H674V34.9H673V50.3H672V38.8H671V43.9H670V35.3H669V50.4H668V38.5H667V45.0H666V34.6H665V46.7H664V37.8H663V49.9H662V35.1H661V39.6H660V34.9H659V47.0H658V37.7H657V55.4H656V34.9H655V46.4H654V35.4H653V49.9H652V35.3H651V36.0H650V43.9H649V40.2H648V48.8H647V32.6H646V45.9H645V32.6H644V36.6H643V33.9H642V38.2H641V31.6H640V31.2H639V37.8H638V31.3H637V41.1H636V32.0H635V46.8H634V34.2H633V45.1H632V31.4H631V45.3H630V32.0H629V48.8H628V31.2H627V42.9H626V31.8H625V31.7H624V47.2H623V32.2H622V52.2H621V31.8H620V52.4H619V31.3H618V49.2H617V31.3H616V35.6H615V45.9H614V31.7H613V47.4H612V31.8H611V45.1H610V31.3H609V50.9H608V31.5H607V31.4H606V49.7H605V31.8H604V40.7H603V36.0H602V31.8H601V54.0H600V36.7H599V48.7H598V32.4H597V49.9H596V38.0H595V52.9H594V31.3H593V52.7H592V31.5H591V44.6H590V31.5H589V41.6H588V31.9H587V41.6H586V34.7H585V45.5H584V32.1H583V51.3H582V31.3H581V37.7H580V31.2H579V45.9H578V32.0H577V41.0H576V32.2H575V50.6H574V31.6H573V31.7H572V46.0H571V31.5H570V32.2H569V47.0H568V31.5H567V39.4H566V35.5H565V46.1H564V31.9H563V40.1H562V31.6H561V31.5H560V31.8H559V48.2H558V32.1H557V42.0H556V33.1H555V32.8H554V43.8H553V32.5H552V35.1H551V43.5H550V34.8H549V37.1H548V49.0H547V35.0H546V48.3H545V34.3H544V35.4H543V34.7H542V47.1H541V35.1H540V35.1H539V50.8H538V40.5H537V43.3H536V35.0H535V51.0H534V38.0H533V34.6H532V56.4H531V35.3H530V54.2H529V35.3H528V37.6H527V35.4H526V41.8H525V34.8H524V47.9H523V35.1H522V34.4H521V44.0H520V34.5H519V34.9H518V46.8H517V34.6H516V37.3H515V35.1H514V43.1H513V36.7H512V51.0H511V35.6H510V52.4H509V35.1H508V41.1H507V34.8H506V44.0H505V35.2H504V35.1H503V44.4H502V35.7H501V35.5H500V50.4H499V35.4H498V44.2H497V36.0H496V43.3H495V37.0H494V34.9H493V44.0H492V35.9H491V35.4H490V50.3H489V35.2H488V38.4H487V35.1H486V45.3H485V39.3H484V42.5H483V34.8H482V46.0H481V37.4H480V39.6H479V51.1H478V34.7H477V47.4H476V35.3H475V42.2H474V35.3H473V44.1H472V35.7H471V51.1H470V35.3H469V35.6H468V46.0H467V35.8H466V36.3H465V52.0H464V35.5H463V45.7H462V37.7H461V44.9H460V35.3H459V52.4H458V35.0H457V49.0H456V35.8H455V36.1H454V51.6H453V35.9H452V51.0H451V36.2H450V38.4H449V40.8H448V35.9H447V50.2H446V35.8H445V35.8H444V51.2H443V36.1H442V46.8H441V35.9H440V45.4H439V57.2H438V48.7H437V35.6H436V36.1H435V50.8H434V36.0H433V47.7H432V39.9H431V37.3H430V47.6H429V40.0H428V36.4H427V45.5H426V38.1H425V47.8H424V35.6H423V49.8H422V34.9H421V42.4H420V41.1H419V45.4H418V36.2H417V53.3H416V35.6H415V46.2H414V35.1H413V48.9H412V35.3H411V53.8H410V36.4H409V47.1H408V39.4H407V35.5H406V48.8H405V35.6H404V49.4H403V35.7H402V35.4H401V35.2H400V45.2H399V35.8H398V47.3H397V40.5H396V36.1H395V49.5H394V39.5H393V51.5H392V35.0H391V34.7H390V52.9H389V36.5H388V35.7H387V34.8H386V34.9H385V34.6H384V40.1H383V32.2H382V32.2H381V31.9H380V31.9H379V46.1H378V31.6H377V31.8H376V32.3H375V32.2H374V43.4H373V31.7H372V30.9H371V31.2H370V30.6H369V37.2H368V31.1H367V31.0H366V30.8H365V31.0H364V31.1H363V31.2H362V30.8H361V34.7H360V30.9H359V31.2H358V31.0H357V30.9H356V31.0H355V31.0H354V30.6H353V30.3H352V31.2H351V30.3H350V30.6H349V30.5H348V30.4H347V30.9H346V31.0H345V31.0H344V30.3H343V31.1H342V31.2H341V37.5H340V32.2H339V32.3H338V35.6H337V51.6H336V35.4H335V53.4H334V35.2H333V42.4H332V35.6H331V44.2H330V35.8H329V36.2H328V49.6H327V35.9H326V44.5H325V35.1H324V39.7H323V51.7H322V35.0H321V50.3H320V36.0H319V35.7H318V48.9H317V39.0H316V51.2H315V35.3H314V47.5H313V35.5H312V39.5H311V36.2H310V47.7H309V35.5H308V49.8H307V37.3H306V35.1H305V45.2H304V35.9H303V49.3H302V35.7H301V45.3H300V35.4H299V43.3H298V35.4H297V42.7H296V35.1H295V46.3H294V39.5H293V37.6H292V51.2H291V34.9H290V51.6H289V35.2H288V47.9H287V34.9H286V35.2H285V41.3H284V35.8H283V35.5H282V46.2H281V35.2H280V49.2H279V34.7H278V44.9H277V37.9H276V39.6H275V41.2H274V35.4H273V44.2H272V35.1H271V50.3H270V34.9H269V46.3H268V35.2H267V45.3H266V35.1H265V43.3H264V38.4H263V46.6H262V37.1H261V49.5H260V37.5H259V44.2H258V35.5H257V49.7H256V35.0H255V34.8H254V51.3H253V34.8H252V41.7H251V37.8H250V38.4H249V47.4H248V34.4H247V42.0H246V38.8H245V45.6H244V37.5H243V44.9H242V34.8H241V57.1H240V35.0H239V47.6H238V35.1H237V36.9H236V49.6H235V35.2H234V48.5H233V34.7H232V35.4H231V43.4H230V35.1H229V51.5H228V35.4H227V49.3H226V35.5H225V44.5H224V34.6H223V51.9H222V40.3H221V48.3H220V36.0H219V40.4H218V35.4H217V45.9H216V35.3H215V49.3H214V36.1H213V35.0H212V51.4H211V35.1H210V42.9H209V35.8H208V35.3H207V48.5H206V35.1H205V45.0H204V35.3H203V50.5H202V35.5H201V47.9H200V36.0H199V43.4H198V35.6H197V35.2H196V45.1H195V37.8H194V43.7H193V36.3H192V45.0H191V39.4H190V36.0H189V54.3H188V35.5H187V35.9H186V44.7H185V39.4H184V34.6H183V34.8H182V33.9H181V33.0H180V34.1H179V32.9H178V34.1H177V33.2H176V33.0H175V33.4H174V34.6H173V33.6H172V34.1H171V34.5H170V33.8H169V33.9H168V34.8H167V39.4H166V34.2H165V45.2H164V36.1H163V41.8H162V35.4H161V48.2H160V35.0H159V47.9H158V41.1H157V44.5H156V35.3H155V35.1H154V47.2H153V35.5H152V35.8H151V54.0H150V35.2H149V47.8H148V35.5H147V43.4H146V34.8H145V40.8H144V50.2H143V39.2H142V35.6H141V49.2H140V35.1H139V34.9H138V49.9H137V35.5H136V43.3H135V38.6H134V40.8H133V35.3H132V46.5H131V56.7H130V36.0H129V37.1H128V48.7H127V34.7H126V35.5H125V37.0H124V49.0H123V38.7H122V42.8H121V35.8H120V40.3H119V36.0H118V50.3H117V40.1H116V46.9H115V37.5H114V35.4H113V50.5H112V41.2H111V46.4H110V35.2H109V35.2H108V43.3H107V37.1H106V35.2H105V43.7H104V39.9H103V36.0H102V44.9H101V35.3H100V34.7H99V44.6H98V35.4H97V35.4H96V47.5H95V38.2H94V48.6H93V38.2H92V49.2H91V30.4H90V30.4H89V31.1H88V30.2H87V31.6H86V30.9H85V30.5H84V30.1H83V31.3H82V30.0H81V30.6H80V32.0H79V31.2H78V30.9H77V31.7H76V29.8H75V29.9H74V29.7H73V29.8H72V29.7H71V29.6H70V29.9H69V29.7H68V29.5H67V29.6H66V29.6H65V29.6H64V29.5H63V29.6H62V29.0H61V29.0H60V29.0H59V29.0H58V29.0H57V29.0H56V29.0H55V29.0H54V29.0H53V29.0H52V29.0H51V29.0H50V29.0H49V29.0H48V29.0H47V29.0H46V29.0H45V29.0H44V29.0H43V29.0H42V29.0H41V29.0H40V29.0H39V29.0H38V29.0H37V29.0H36V29.0H35V29.0H34V29.0H33V29.0H32V29.0H31V29.0H30V29.0H29V29.0H28V29.0H27V29.0H26V29.0H25V29.0H24V29.0H23V29.0H22V29.0H21V29.0H20V29.0H19V29.0H18V29.0H17V29.0H16V29.0H15V29.0H14V29.0H13V29.0H12V29.0H11V29.0H10V29.0H9V29.0H8V29.0H7V29.0H6V29.0H5V29.0H4V29.0H3V29.0H2V29.0H1V29.0H0ZM0 84.0H1V84.0H2V84.0H3V84.0H4V84.0H5V84.0H6V84.0H7V84.0H8V84.0H9V84.0H10V84.0H11V84.0H12V84.0H13V84.0H14V84.0H15V84.0H16V84.0H17V84.0H18V84.0H19V84.0H20V84.0H21V84.0H22V84.0H23V84.0H24V84.0H25V84.0H26V84.0H27V84.0H28V84.0H29V84.0H30V84.0H31V84.0H32V84.0H33V84.0H34V84.0H35V84.0H36V84.0H37V84.0H38V84.0H39V84.0H40V84.0H41V84.0H42V84.0H43V84.0H44V84.0H45V84.0H46V84.0H47V84.0H48V84.0H49V84.0H50V84.0H51V84.0H52V84.0H53V84.0H54V84.0H55V84.0H56V84.0H57V84.0H58V84.0H59V84.0H60V84.0H61V84.0H62V83.4H63V83.5H64V83.4H65V83.4H66V83.3H67V83.5H68V83.3H69V83.1H70V83.4H71V83.2H72V83.2H73V83.3H74V83.1H75V83.3H76V81.5H77V81.9H78V81.9H79V81.3H80V82.5H81V83.0H82V81.7H83V82.9H84V82.5H85V82.2H86V81.4H87V82.8H88V81.9H89V82.5H90V82.7H91V63.9H92V74.6H93V64.6H94V74.8H95V65.4H96V77.6H97V77.6H98V66.7H99V78.3H100V77.7H101V68.7H102V77.0H103V72.7H104V67.9H105V77.8H106V75.9H107V70.8H108V77.8H109V77.8H110V64.6H111V72.8H112V61.3H113V77.6H114V75.5H115V66.1H116V73.5H117V64.4H118V77.0H119V73.1H120V77.2H121V70.7H122V74.1H123V64.8H124V76.0H125V77.5H126V78.3H127V64.6H128V75.9H129V77.0H130V57.2H131V65.8H132V77.7H133V71.2H134V73.6H135V69.6H136V77.5H137V60.4H138V78.1H139V77.9H140V64.0H141V77.4H142V73.6H143V64.2H144V73.0H145V78.2H146V70.2H147V77.5H148V62.8H149V77.8H150V62.2H151V77.2H152V77.5H153V64.6H154V77.9H155V77.7H156V66.7H157V72.7H158V67.0H159V78.0H160V66.2H161V77.6H162V71.3H163V76.9H164V68.7H165V78.8H166V73.6H167V78.2H168V79.2H169V79.3H170V78.6H171V78.9H172V79.3H173V78.3H174V79.6H175V79.9H176V79.8H177V79.1H178V80.1H179V78.9H180V79.9H181V79.3H182V78.5H183V78.4H184V73.4H185V67.2H186V77.1H187V77.5H188V61.9H189V77.0H190V72.8H191V69.5H192V76.7H193V69.4H194V75.2H195V67.3H196V77.8H197V77.4H198V67.6H199V77.0H200V64.6H201V77.5H202V64.2H203V77.7H204V66.0H205V77.9H206V65.7H207V77.7H208V77.2H209V69.5H210V77.9H211V63.8H212V78.0H213V76.9H214V60.8H215V77.7H216V65.2H217V77.6H218V72.8H219V77.0H220V61.9H221V73.0H222V62.9H223V78.4H224V68.7H225V77.5H226V64.4H227V77.6H228V61.9H229V77.9H230V70.3H231V77.6H232V78.3H233V63.3H234V77.8H235V61.5H236V76.1H237V77.9H238V67.2H239V78.0H240V56.8H241V78.2H242V68.0H243V75.5H244V68.3H245V73.5H246V70.4H247V78.6H248V66.0H249V74.2H250V75.2H251V70.5H252V78.2H253V64.5H254V78.2H255V78.0H256V63.4H257V77.5H258V68.6H259V75.5H260V64.1H261V75.9H262V65.1H263V74.7H264V68.9H265V77.9H266V68.4H267V77.8H268V67.8H269V78.1H270V61.3H271V77.9H272V67.7H273V77.6H274V70.4H275V74.0H276V75.1H277V66.4H278V78.3H279V63.1H280V77.8H281V67.7H282V77.5H283V77.2H284V71.2H285V77.8H286V78.1H287V66.1H288V77.8H289V63.6H290V78.1H291V64.5H292V75.4H293V73.0H294V66.2H295V77.9H296V68.9H297V77.6H298V69.2H299V77.6H300V67.0H301V77.3H302V64.2H303V77.1H304V67.3H305V77.9H306V75.7H307V63.4H308V77.5H309V64.4H310V76.8H311V72.8H312V77.5H313V64.6H314V77.7H315V63.4H316V73.1H317V62.6H318V77.3H319V77.0H320V62.0H321V78.0H322V60.7H323V72.3H324V77.9H325V68.6H326V77.1H327V65.7H328V76.8H329V77.2H330V69.0H331V77.4H332V71.6H333V77.8H334V61.6H335V77.6H336V61.0H337V77.4H338V80.7H339V80.8H340V75.1H341V81.9H342V81.9H343V82.7H344V82.0H345V82.0H346V82.1H347V82.6H348V82.5H349V82.4H350V82.7H351V81.8H352V82.7H353V82.4H354V82.0H355V82.0H356V82.1H357V82.0H358V81.8H359V82.1H360V78.5H361V82.2H362V81.8H363V81.9H364V82.0H365V82.2H366V82.0H367V81.9H368V74.4H369V82.4H370V81.8H371V82.1H372V81.3H373V69.9H374V80.8H375V80.7H376V81.2H377V81.4H378V64.5H379V81.1H380V81.1H381V80.8H382V80.8H383V73.2H384V78.4H385V78.1H386V78.2H387V77.3H388V76.5H389V62.4H390V78.3H391V78.0H392V61.7H393V74.0H394V63.6H395V76.9H396V73.3H397V65.1H398V77.2H399V68.0H400V77.8H401V77.6H402V77.3H403V61.1H404V77.4H405V61.6H406V77.5H407V74.0H408V66.6H409V76.6H410V60.1H411V77.7H412V63.0H413V77.9H414V68.4H415V77.4H416V62.6H417V76.8H418V68.9H419V72.3H420V69.6H421V78.1H422V60.2H423V77.4H424V64.3H425V74.9H426V68.6H427V76.6H428V73.3H429V63.1H430V75.7H431V72.5H432V65.2H433V77.0H434V63.2H435V76.9H436V77.4H437V66.2H438V56.7H439V65.7H440V77.1H441V66.2H442V76.9H443V60.7H444V77.2H445V77.2H446V61.9H447V77.1H448V73.1H449V74.1H450V76.8H451V63.6H452V77.1H453V63.6H454V76.9H455V77.2H456V66.1H457V78.0H458V60.2H459V77.7H460V68.7H461V75.3H462V67.5H463V77.5H464V59.7H465V76.7H466V77.2H467V68.1H468V77.4H469V77.7H470V61.0H471V77.3H472V67.8H473V77.7H474V69.3H475V77.7H476V62.7H477V78.3H478V60.0H479V74.2H480V75.6H481V65.3H482V78.2H483V71.0H484V73.4H485V68.5H486V77.9H487V74.6H488V77.8H489V60.5H490V77.6H491V77.1H492V68.8H493V78.1H494V76.0H495V69.1H496V77.0H497V67.3H498V77.6H499V64.7H500V77.5H501V77.3H502V66.2H503V77.9H504V77.8H505V69.5H506V78.2H507V70.4H508V77.9H509V61.7H510V77.4H511V63.4H512V76.3H513V70.4H514V77.9H515V75.7H516V78.4H517V67.3H518V78.1H519V78.5H520V69.0H521V78.6H522V77.9H523V62.1H524V78.2H525V69.6H526V77.6H527V75.4H528V77.7H529V61.6H530V77.7H531V56.6H532V78.4H533V74.4H534V63.7H535V78.0H536V67.5H537V72.5H538V61.6H539V77.9H540V77.9H541V67.6H542V78.3H543V77.6H544V78.7H545V62.9H546V78.0H547V64.0H548V75.9H549V78.2H550V67.7H551V77.9H552V80.5H553V68.9H554V80.2H555V79.9H556V69.2H557V80.9H558V63.6H559V81.2H560V81.5H561V81.4H562V73.1H563V81.1H564V66.4H565V76.9H566V71.7H567V81.5H568V68.2H569V80.8H570V81.5H571V68.5H572V81.3H573V81.4H574V62.3H575V80.8H576V72.9H577V81.0H578V64.8H579V81.8H580V73.8H581V81.7H582V64.4H583V80.9H584V67.9H585V78.3H586V71.5H587V81.1H588V71.7H589V81.5H590V67.1H591V81.5H592V63.8H593V81.7H594V63.3H595V75.3H596V61.6H597V80.6H598V63.2H599V76.8H600V61.0H601V81.2H602V76.7H603V71.3H604V81.2H605V64.3H606V81.6H607V81.5H608V65.1H609V81.7H610V64.8H611V81.2H612V67.8H613V81.3H614V64.6H615V76.8H616V81.7H617V62.8H618V81.7H619V62.8H620V81.2H621V62.0H622V80.8H623V64.7H624V81.3H625V81.2H626V68.9H627V81.8H628V66.9H629V81.0H630V66.3H631V81.6H632V64.7H633V78.8H634V64.4H635V81.0H636V72.6H637V81.7H638V74.1H639V81.8H640V81.4H641V74.3H642V79.0H643V75.2H644V80.4H645V69.0H646V80.4H647V64.9H648V73.6H649V69.2H650V77.0H651V77.7H652V60.8H653V77.6H654V68.4H655V78.1H656V60.5H657V75.3H658V65.6H659V78.1H660V72.9H661V77.9H662V61.3H663V75.2H664V67.7H665V78.4H666V69.7H667V74.5H668V60.9H669V77.7H670V69.3H671V74.4H672V64.2H673V78.1H674V60.4H675V77.9H676V69.8H677V78.0H678V69.1H679V78.5H680V77.9H681V67.1H682V78.7H683V62.0H684V77.5H685V73.3H686V64.2H687V78.2H688V78.2H689V68.2H690V78.4H691V56.5H692V63.6H693V77.6H694V77.8H695V61.6H696V77.5H697V62.0H698V77.8H699V77.2H700V78.6H701V68.7H702V78.3H703V72.9H704V69.5H705V73.1H706V70.1H707V77.7H708V78.1H709V70.4H710V75.1H711V77.9H712V66.7H713V78.3H714V69.3H715V74.2H716V64.7H717V77.6H718V60.6H719V72.7H720V72.7H721V63.6H722V73.3H723V65.1H724V74.3H725V76.9H726V67.3H727V77.1H728V65.8H729V77.6H730V67.7H731V77.9H732V60.3H733V74.2H734V77.2H735V62.1H736V77.3H737V77.4H738V63.1H739V77.1H740V76.9H741V67.5H742V76.8H743V68.0H744V72.3H745V77.2H746V62.2H747V76.7H748V69.6H749V76.7H750V67.8H751V77.5H752V63.3H753V75.6H754V77.1H755V68.1H756V77.1H757V64.2H758V77.3H759V72.6H760V66.4H761V76.9H762V65.0H763V77.5H764V69.2H765V77.2H766V60.3H767V77.7H768V55.8H769V60.7H770V77.5H771V65.1H772V73.1H773V77.3H774V59.9H775V77.5H776V73.0H777V77.4H778V78.0H779V64.2H780V77.6H781V69.0H782V77.9H783V60.9H784V77.6H785V69.5H786V77.5H787V65.2H788V77.1H789V61.4H790V75.4H791V64.3H792V74.7H793V71.9H794V77.9H795V63.3H796V78.1H797V78.2H798V68.8H799V77.9H800V73.0H801V64.2H802V78.4H803V75.9H804V77.5H805V63.1H806V77.5H807V63.2H808V78.5H809V70.0H810V78.5H811V78.2H812V70.7H813V78.2H814V68.2H815V78.5H816V72.8H817V77.7H818V78.1H819V69.1H820V78.4H821V79.0H822V68.2H823V78.5H824V72.9H825V78.3H826V74.8H827V76.2H828V71.5H829V78.9H830V70.6H831V79.2H832V79.4H833V70.8H834V78.8H835V77.5H836V71.7H837V78.4H838V79.3H839V74.8H840V79.0H841V71.6H842V77.7H843V72.2H844V79.6H845V73.5H846V79.3H847V78.9H848V74.9H849V79.3H850V75.5H851V77.5H852V75.6H853V79.6H854V75.2H855V79.8H856V77.9H857V79.9H858V79.5H859V77.1H860V79.7H861V75.7H862V79.8H863V76.9H864V80.2H865V77.4H866V79.8H867V80.0H868V76.7H869V78.5H870V79.4H871V78.5H872V78.4H873V80.2H874V77.6H875V80.1H876V78.4H877V79.1H878V79.4H879V79.3H880V78.8H881V79.8H882V79.8H883V81.0H884V78.9H885V80.6H886V80.4H887V81.0H888V80.3H889V81.1H890V80.2H891V80.9H892V80.2H893V80.5H894V80.1H895V80.6H896V80.8H897V80.4H898V81.3H899V81.1H900V81.0H901V81.8H902V81.2H903V81.4H904V81.7H905V81.4H906V82.0H907V81.3H908V81.6H909V81.9H910V81.5H911V81.9H912V82.0H913V82.3H914V81.9H915V82.2H916V82.4H917V82.7H918V82.6H919V82.8H920V83.0H921V82.7H922V83.0H923V83.1H924V82.9H925V83.1H926V83.3H927V83.4H928V83.5H929V83.7H930V83.8H931V83.9H932V84.0H933V84.0H934V84.0H935V84.0H936V84.0H937V84.0H938V84.0H939V84.0H940V84.0H941V84.0H942V84.0H943V84.0H944V84.0H945V84.0H946V85.0H945V85.0H944V85.0H943V85.0H942V85.0H941V85.0H940V85.0H939V85.0H938V85.0H937V85.0H936V85.0H935V85.0H934V85.0H933V85.0H932V85.1H931V85.2H930V85.3H929V85.5H928V85.6H927V85.7H926V85.9H925V86.1H924V85.9H923V86.0H922V86.2H921V86.0H920V86.2H919V86.5H918V86.3H917V86.6H916V86.7H915V87.1H914V86.7H913V87.0H912V87.1H911V87.5H910V87.1H909V87.4H908V87.6H907V87.0H906V87.5H905V87.3H904V87.6H903V87.9H902V87.2H901V88.1H900V88.0H899V87.7H898V88.7H897V88.3H896V88.3H895V88.6H894V88.5H893V88.8H892V88.0H891V88.7H890V87.9H889V88.6H888V88.0H887V88.7H886V88.4H885V90.1H884V88.0H883V89.4H882V89.2H881V90.0H880V89.5H879V89.8H878V89.8H877V90.8H876V88.9H875V91.3H874V88.8H873V90.9H872V90.4H871V89.6H870V90.6H869V92.7H868V89.0H867V89.2H866V91.8H865V88.8H864V92.5H863V89.2H862V93.2H861V89.3H860V92.2H859V89.5H858V89.1H857V90.7H856V89.2H855V94.2H854V89.4H853V93.3H852V91.2H851V94.1H850V89.7H849V93.9H848V90.1H847V89.7H846V94.7H845V89.4H844V96.8H843V91.1H842V97.6H841V90.0H840V94.7H839V89.7H838V90.6H837V96.7H836V91.2H835V90.2H834V99.8H833V89.6H832V89.8H831V98.6H830V90.1H829V96.3H828V92.8H827V94.6H826V90.7H825V97.2H824V90.5H823V99.4H822V90.0H821V90.6H820V99.1H819V90.9H818V91.3H817V97.2H816V90.5H815V98.8H814V90.8H813V99.0H812V90.8H811V90.5H810V99.0H809V90.5H808V102.9H807V91.5H806V103.3H805V91.5H804V93.1H803V90.6H802V106.3H801V96.2H800V91.1H799V102.0H798V90.8H797V90.9H796V106.7H795V91.1H794V98.2H793V94.3H792V104.6H791V93.6H790V108.5H789V91.9H788V106.4H787V91.5H786V98.1H785V91.4H784V111.1H783V91.1H782V101.2H781V91.4H780V103.8H779V91.0H778V91.6H777V95.3H776V91.5H775V108.9H774V91.7H773V95.5H772V101.9H771V91.5H770V106.7H769V114.1H768V91.3H767V110.8H766V91.8H765V99.5H764V91.5H763V103.0H762V92.1H761V101.4H760V97.0H759V91.7H758V103.9H757V91.9H756V100.4H755V91.9H754V93.4H753V106.5H752V91.5H751V99.5H750V92.3H749V98.0H748V92.3H747V104.8H746V91.8H745V96.0H744V101.8H743V92.2H742V99.8H741V92.1H740V91.9H739V108.2H738V91.6H737V91.7H736V108.1H735V91.8H734V94.7H733V106.0H732V91.1H731V102.1H730V91.4H729V101.4H728V91.9H727V101.2H726V92.1H725V94.7H724V103.3H723V94.9H722V105.9H721V96.4H720V96.3H719V105.9H718V91.4H717V103.8H716V95.2H715V100.6H714V90.7H713V104.2H712V91.1H711V93.9H710V99.6H709V90.9H708V91.3H707V98.3H706V94.9H705V99.4H704V95.4H703V90.7H702V100.8H701V90.4H700V91.8H699V91.2H698V109.4H697V91.5H696V105.9H695V91.2H694V91.4H693V105.1H692V113.4H691V90.6H690V100.5H689V90.8H688V90.8H687V102.5H686V95.0H685V91.5H684V107.7H683V90.3H682V101.7H681V91.1H680V90.5H679V100.6H678V91.0H677V98.3H676V91.1H675V108.4H674V90.9H673V106.3H672V94.8H671V99.9H670V91.3H669V106.4H668V94.5H667V101.0H666V90.6H665V102.7H664V93.8H663V105.9H662V91.1H661V95.6H660V90.9H659V103.0H658V93.7H657V111.4H656V90.9H655V102.4H654V91.4H653V105.9H652V91.3H651V92.0H650V99.9H649V96.2H648V104.8H647V88.6H646V101.9H645V88.6H644V92.6H643V89.9H642V94.2H641V87.6H640V87.2H639V93.8H638V87.3H637V97.1H636V88.0H635V102.8H634V90.2H633V101.1H632V87.4H631V101.3H630V88.0H629V104.8H628V87.2H627V98.9H626V87.8H625V87.7H624V103.2H623V88.2H622V108.2H621V87.8H620V108.4H619V87.3H618V105.2H617V87.3H616V91.6H615V101.9H614V87.7H613V103.4H612V87.8H611V101.1H610V87.3H609V106.9H608V87.5H607V87.4H606V105.7H605V87.8H604V96.7H603V92.0H602V87.8H601V110.0H600V92.7H599V104.7H598V88.4H597V105.9H596V94.0H595V108.9H594V87.3H593V108.7H592V87.5H591V100.6H590V87.5H589V97.6H588V87.9H587V97.6H586V90.7H585V101.5H584V88.1H583V107.3H582V87.3H581V93.7H580V87.2H579V101.9H578V88.0H577V97.0H576V88.2H575V106.6H574V87.6H573V87.7H572V102.0H571V87.5H570V88.2H569V103.0H568V87.5H567V95.4H566V91.5H565V102.1H564V87.9H563V96.1H562V87.6H561V87.5H560V87.8H559V104.2H558V88.1H557V98.0H556V89.1H555V88.8H554V99.8H553V88.5H552V91.1H551V99.5H550V90.8H549V93.1H548V105.0H547V91.0H546V104.3H545V90.3H544V91.4H543V90.7H542V103.1H541V91.1H540V91.1H539V106.8H538V96.5H537V99.3H536V91.0H535V107.0H534V94.0H533V90.6H532V112.4H531V91.3H530V110.2H529V91.3H528V93.6H527V91.4H526V97.8H525V90.8H524V103.9H523V91.1H522V90.4H521V100.0H520V90.5H519V90.9H518V102.8H517V90.6H516V93.3H515V91.1H514V99.1H513V92.7H512V107.0H511V91.6H510V108.4H509V91.1H508V97.1H507V90.8H506V100.0H505V91.2H504V91.1H503V100.4H502V91.7H501V91.5H500V106.4H499V91.4H498V100.2H497V92.0H496V99.3H495V93.0H494V90.9H493V100.0H492V91.9H491V91.4H490V106.3H489V91.2H488V94.4H487V91.1H486V101.3H485V95.3H484V98.5H483V90.8H482V102.0H481V93.4H480V95.6H479V107.1H478V90.7H477V103.4H476V91.3H475V98.2H474V91.3H473V100.1H472V91.7H471V107.1H470V91.3H469V91.6H468V102.0H467V91.8H466V92.3H465V108.0H464V91.5H463V101.7H462V93.7H461V100.9H460V91.3H459V108.4H458V91.0H457V105.0H456V91.8H455V92.1H454V107.6H453V91.9H452V107.0H451V92.2H450V94.4H449V96.8H448V91.9H447V106.2H446V91.8H445V91.8H444V107.2H443V92.1H442V102.8H441V91.9H440V101.4H439V113.2H438V104.7H437V91.6H436V92.1H435V106.8H434V92.0H433V103.7H432V95.9H431V93.3H430V103.6H429V96.0H428V92.4H427V101.5H426V94.1H425V103.8H424V91.6H423V105.8H422V90.9H421V98.4H420V97.1H419V101.4H418V92.2H417V109.3H416V91.6H415V102.2H414V91.1H413V104.9H412V91.3H411V109.8H410V92.4H409V103.1H408V95.4H407V91.5H406V104.8H405V91.6H404V105.4H403V91.7H402V91.4H401V91.2H400V101.2H399V91.8H398V103.3H397V96.5H396V92.1H395V105.5H394V95.5H393V107.5H392V91.0H391V90.7H390V108.9H389V92.5H388V91.7H387V90.8H386V90.9H385V90.6H384V96.1H383V88.2H382V88.2H381V87.9H380V87.9H379V102.1H378V87.6H377V87.8H376V88.3H375V88.2H374V99.4H373V87.7H372V86.9H371V87.2H370V86.6H369V93.2H368V87.1H367V87.0H366V86.8H365V87.0H364V87.1H363V87.2H362V86.8H361V90.7H360V86.9H359V87.2H358V87.0H357V86.9H356V87.0H355V87.0H354V86.6H353V86.3H352V87.2H351V86.3H350V86.6H349V86.5H348V86.4H347V86.9H346V87.0H345V87.0H344V86.3H343V87.1H342V87.2H341V93.5H340V88.2H339V88.3H338V91.6H337V107.6H336V91.4H335V109.4H334V91.2H333V98.4H332V91.6H331V100.2H330V91.8H329V92.2H328V105.6H327V91.9H326V100.5H325V91.1H324V95.7H323V107.7H322V91.0H321V106.3H320V92.0H319V91.7H318V104.9H317V95.0H316V107.2H315V91.3H314V103.5H313V91.5H312V95.5H311V92.2H310V103.7H309V91.5H308V105.8H307V93.3H306V91.1H305V101.2H304V91.9H303V105.3H302V91.7H301V101.3H300V91.4H299V99.3H298V91.4H297V98.7H296V91.1H295V102.3H294V95.5H293V93.6H292V107.2H291V90.9H290V107.6H289V91.2H288V103.9H287V90.9H286V91.2H285V97.3H284V91.8H283V91.5H282V102.2H281V91.2H280V105.2H279V90.7H278V100.9H277V93.9H276V95.6H275V97.2H274V91.4H273V100.2H272V91.1H271V106.3H270V90.9H269V102.3H268V91.2H267V101.3H266V91.1H265V99.3H264V94.4H263V102.6H262V93.1H261V105.5H260V93.5H259V100.2H258V91.5H257V105.7H256V91.0H255V90.8H254V107.3H253V90.8H252V97.7H251V93.8H250V94.4H249V103.4H248V90.4H247V98.0H246V94.8H245V101.6H244V93.5H243V100.9H242V90.8H241V113.1H240V91.0H239V103.6H238V91.1H237V92.9H236V105.6H235V91.2H234V104.5H233V90.7H232V91.4H231V99.4H230V91.1H229V107.5H228V91.4H227V105.3H226V91.5H225V100.5H224V90.6H223V107.9H222V96.3H221V104.3H220V92.0H219V96.4H218V91.4H217V101.9H216V91.3H215V105.3H214V92.1H213V91.0H212V107.4H211V91.1H210V98.9H209V91.8H208V91.3H207V104.5H206V91.1H205V101.0H204V91.3H203V106.5H202V91.5H201V103.9H200V92.0H199V99.4H198V91.6H197V91.2H196V101.1H195V93.8H194V99.7H193V92.3H192V101.0H191V95.4H190V92.0H189V110.3H188V91.5H187V91.9H186V100.7H185V95.4H184V90.6H183V90.8H182V89.9H181V89.0H180V90.1H179V88.9H178V90.1H177V89.2H176V89.0H175V89.4H174V90.6H173V89.6H172V90.1H171V90.5H170V89.8H169V89.9H168V90.8H167V95.4H166V90.2H165V101.2H164V92.1H163V97.8H162V91.4H161V104.2H160V91.0H159V103.9H158V97.1H157V100.5H156V91.3H155V91.1H154V103.2H153V91.5H152V91.8H151V110.0H150V91.2H149V103.8H148V91.5H147V99.4H146V90.8H145V96.8H144V106.2H143V95.2H142V91.6H141V105.2H140V91.1H139V90.9H138V105.9H137V91.5H136V99.3H135V94.6H134V96.8H133V91.3H132V102.5H131V112.7H130V92.0H129V93.1H128V104.7H127V90.7H126V91.5H125V93.0H124V105.0H123V94.7H122V98.8H121V91.8H120V96.3H119V92.0H118V106.3H117V96.1H116V102.9H115V93.5H114V91.4H113V106.5H112V97.2H111V102.4H110V91.2H109V91.2H108V99.3H107V93.1H106V91.2H105V99.7H104V95.9H103V92.0H102V100.9H101V91.3H100V90.7H99V100.6H98V91.4H97V91.4H96V103.5H95V94.2H94V104.6H93V94.2H92V105.2H91V86.4H90V86.4H89V87.1H88V86.2H87V87.6H86V86.9H85V86.5H84V86.1H83V87.3H82V86.0H81V86.6H80V88.0H79V87.2H78V86.9H77V87.7H76V85.8H75V85.9H74V85.7H73V85.8H72V85.7H71V85.6H70V85.9H69V85.7H68V85.5H67V85.6H66V85.6H65V85.6H64V85.5H63V85.6H62V85.0H61V85.0H60V85.0H59V85.0H58V85.0H57V85.0H56V85.0H55V85.0H54V85.0H53V85.0H52V85.0H51V85.0H50V85.0H49V85.0H48V85.0H47V85.0H46V85.0H45V85.0H44V85.0H43V85.0H42V85.0H41V85.0H40V85.0H39V85.0H38V85.0H37V85.0H36V85.0H35V85.0H34V85.0H33V85.0H32V85.0H31V85.0H30V85.0H29V85.0H28V85.0H27V85.0H26V85.0H25V85.0H24V85.0H23V85.0H22V85.0H21V85.0H20V85.0H19V85.0H18V85.0H17V85.0H16V85.0H15V85.0H14V85.0H13V85.0H12V85.0H11V85.0H10V85.0H9V85.0H8V85.0H7V85.0H6V85.0H5V85.0H4V85.0H3V85.0H2V85.0H1V85.0H0Z"></path>
<clipPath id="cl1"><rect x="16" y="0" width="929" height="112"></rect></clipPath>
<clipPath id="cl2"><rect x="945" y="0" width="945" height="112"></rect></clipPath></defs>
<rect x="16" y="0" width="929" height="112" fill="#196734"></rect>
<g clip-path="url(#cl1)"><use href="#wv" x="16" fill="#96fbb9"></use></g>
<path d="M16 0H107V14L16 98Z" fill="#101b1b" fill-opacity="0.5"></path>
<path d="M883 0H945V81L883.5 14.5Z" fill="#101b1b" fill-opacity="0.5"></path>
<rect x="945" y="0" width="945" height="112" fill="#07451a"></rect>
<linearGradient id="sg" x1="0" x2="1" y1="0" y2="0"><stop offset="0" stop-color="#254d32"></stop><stop offset="0.72" stop-color="#254d32"></stop><stop offset="1" stop-color="#254d32" stop-opacity="0"></stop></linearGradient>
<path d="M945.6 0H963V78L953 89L945.6 97Z" fill="url(#sg)"></path>
<g clip-path="url(#cl2)"><use href="#wv" x="945" fill="#7cc594"></use></g>
<path d="M945 0H1012V14L945.5 97Z" fill="#031316" fill-opacity="0.5"></path>
<path d="M1797 0H1890V97L1797.5 14.5Z" fill="#031316" fill-opacity="0.5"></path>
<rect x="944" y="0" width="1" height="81" fill="#20463a"></rect>
<rect x="945" y="0" width="0.8" height="112" fill="#0a2a1c"></rect>
<path d="M946 97.5L953 89L960.5 97.5Z" fill="#196734"></path>
<g stroke="#e4f6ee" stroke-width="1.5" fill="none" stroke-linecap="round"><path d="M16.5 97.5L106 14.5"></path><path d="M883.5 14.5L960.5 97.5"></path><path d="M946 97.5L1012 14.5"></path><path d="M1797.5 14.5L1889.5 97.5"></path></g>
<path d="M17 98H30V111H17Z" fill="#0c1c1a"></path><path d="M17 98H30V111H17Z" fill="none" stroke="#eaf7f2" stroke-width="2"></path><circle cx="26.4" cy="104.6" r="2.4" fill="#eaf7f2"></circle>
<path d="M111 1H120V14H106V6Z" fill="#0f2a20"></path><path d="M120 1H111L106 6V14H120" fill="none" stroke="#eaf7f2" stroke-width="2"></path><circle cx="115.4" cy="7.6" r="2.4" fill="#eaf7f2"></circle>
<path d="M869 1H878L883 6V14H869Z" fill="#0f2a20"></path><path d="M869 1H878L883 6V14H869" fill="none" stroke="#eaf7f2" stroke-width="2"></path><circle cx="873.6" cy="7.6" r="2.4" fill="#eaf7f2"></circle>
<path d="M946.5 98H959.5V111H946.5Z" fill="#0c1c1a"></path><path d="M946.5 98H959.5V111H946.5Z" fill="none" stroke="#eaf7f2" stroke-width="2"></path><circle cx="955.9" cy="104.6" r="2.4" fill="#eaf7f2"></circle>
<path d="M1017 1H1026V14H1012V6Z" fill="#0f2a20"></path><path d="M1026 1H1017L1012 6V14H1026" fill="none" stroke="#eaf7f2" stroke-width="2"></path><circle cx="1021.4" cy="7.6" r="2.4" fill="#eaf7f2"></circle>
<path d="M1783 1H1792L1797 6V14H1783Z" fill="#0f2a20"></path><path d="M1783 1H1792L1797 6V14H1783" fill="none" stroke="#eaf7f2" stroke-width="2"></path><circle cx="1787.6" cy="7.6" r="2.4" fill="#eaf7f2"></circle>
<path d="M1876 98H1889V111H1876Z" fill="#0c1c1a"></path><path d="M1876 98H1889V111H1876Z" fill="none" stroke="#eaf7f2" stroke-width="2"></path><circle cx="1879.6" cy="104.6" r="2.4" fill="#eaf7f2"></circle>
</svg>
<div class="a" style="left:0;top:732px;width:1919px;height:3px;background:#0c1719"></div>
<div class="a" style="left:0;top:741px;width:1919px;height:3px;background:#13191d"></div>
<div class="a" style="left:1px;top:735px;width:1917px;height:6.3px;background:#253c41;border-radius:3px"></div>

<!-- info bar -->
<div class="a" style="left:0;top:744px;width:1919px;height:37px;background:#000"></div>
<div class="t" style="font-size: 12px; color: rgb(180, 236, 214); letter-spacing: 0.7px; left: 20.6px; top: 756.95px;">repeater-live-arrangement.wav</div>
<div class="a" style="left:1084px;top:752px;width:21px;height:21px;background:#28454d;border-radius:3px"></div>
<svg style="left:1084px;top:752px" width="21" height="21" viewBox="0 0 21 21"><path d="M6.2 4.8V16.2L15.6 10.5Z" fill="none" stroke="#7fd8d8" stroke-width="1.3" stroke-linejoin="round"></path></svg>
<div class="t" style="font-size: 11.8px; color: rgb(110, 195, 207); letter-spacing: 0.52px; left: 1126.5px; top: 757.4px;">Start:</div>
<div class="t" style="font-size: 11.6px; color: rgb(198, 244, 226); letter-spacing: 0.96px; left: 1165.2px; top: 756.4px;">00:00:05.647</div>
<div class="t" style="font-size: 11.8px; color: rgb(110, 195, 207); letter-spacing: 0.2px; left: 1267.2px; top: 757.4px;">End:</div>
<div class="t" style="font-size: 11.6px; color: rgb(198, 244, 226); letter-spacing: 0.95px; left: 1300.3px; top: 756.4px;">00:05:39.337</div>
<div class="t" style="font-size: 11.8px; color: rgb(110, 195, 207); letter-spacing: 0.6px; left: 1395.3px; top: 757.4px;">Length:</div>
<div class="t" style="font-size: 11.6px; color: rgb(198, 244, 226); letter-spacing: 0.98px; left: 1445.3px; top: 756.4px;">00:05:33.690</div>
<div class="t" style="font-size: 11.8px; color: rgb(110, 195, 207); letter-spacing: 0.43px; left: 1542.5px; top: 757.4px;">Fade In:</div>
<div class="t" style="font-size: 11.6px; color: rgb(198, 244, 226); letter-spacing: 1.03px; left: 1595.3px; top: 756.4px;">00:00:32.117</div>
<div class="t" style="font-size: 11.8px; color: rgb(110, 195, 207); letter-spacing: 0.6px; left: 1695.2px; top: 757.4px;">Fade Out:</div>
<div class="t" style="font-size: 11.6px; color: rgb(198, 244, 226); letter-spacing: 0.97px; left: 1760.6px; top: 756.4px;">00:00:27.529</div>
<div class="btn" style="left:1863px;top:752px;width:35px;height:21px;background:#28454d"></div>
<div class="t" style="font-size: 11.8px; color: rgb(127, 211, 211); letter-spacing: 0px; left: 1869.3px; top: 757.4px;">Unit</div>

<!-- bottom-left chain panel -->
<div class="btn" style="left:20px;top:799px;width:21px;height:21px"></div>
<div class="btn" style="left:46px;top:799px;width:21px;height:21px"></div>
<div class="btn" style="left:72px;top:799px;width:21px;height:21px"></div>
<div class="btn" style="left:98px;top:799px;width:21px;height:21px"></div>
<svg style="left:20px;top:799px" width="100" height="21" viewBox="0 0 100 21">
<path d="M5.8 10.6H15.2M10.5 5.9V15.3" stroke="#7fd8e4" stroke-width="1.5"></path>
<path d="M32.2 10.6H40.8" stroke="#7fd8e4" stroke-width="1.5"></path>
<path d="M62.5 5.6L68.2 14.8H56.8Z" fill="#6cc6de" stroke="#6cc6de" stroke-width="1" stroke-linejoin="round"></path>
<path d="M88.5 15.4L94.2 6.2H82.8Z" fill="#6cc6de" stroke="#6cc6de" stroke-width="1" stroke-linejoin="round"></path>
</svg>
<div class="btn" style="left:124px;top:799px;width:219px;height:21px"></div>
<div class="t" style="font-size: 12px; color: rgb(98, 180, 189); letter-spacing: 0.55px; left: 147.3px; top: 802.9px;">master channel chain presets</div>
<div class="btn" style="left:348px;top:799px;width:21px;height:21px"></div>
<svg style="left:348px;top:799px" width="21" height="21" viewBox="0 0 21 21"><path d="M6.4 7H14.6M6.4 10.5H14.6M6.4 14H14.6" stroke="#8fe0e6" stroke-width="1.4"></path></svg>
<div class="btn" style="left:374px;top:799px;width:52px;height:21px"></div>
<div class="t" style="font-size: 11.8px; color: rgb(127, 211, 211); letter-spacing: -0.04px; left: 380.4px; top: 803.7px;">Bypass</div>
<div class="t" style="font-size: 11.8px; color: rgb(30, 55, 61); letter-spacing: 0.7px; left: 444.4px; top: 804.7px;">Master</div>
<div class="a" style="left:20px;top:825px;width:406px;height:207px;background:#233a40;border-radius:3px"></div>
<div class="a" style="left:432px;top:829px;width:6px;height:199px;background:#21373e;border-radius:1px"></div>
<div class="a" style="left:444px;top:826px;width:40px;height:206px;background:#131f22;border-radius:3px"></div>
<div class="a" style="left:461px;top:833px;width:5px;height:168px;background:#0f1a1d;border-radius:2px"></div>
<div class="a" style="left:449px;top:1007px;width:31px;height:2px;background:#17282c"></div>
<div class="a" style="left:449px;top:909px;width:29.5px;height:12.5px;background:#27464e;border-radius:3px"></div>
<div class="a" style="left:449px;top:909px;width:29.5px;height:5.5px;background:#2f525a;border-radius:3px 3px 0 0"></div>
<div class="a" style="left:449px;top:914.5px;width:29.5px;height:1px;background:#1a3036"></div>
<div class="t" style="left:471.5px;top:1016px;font-size:11.5px;color:#284549">0</div>

<!-- TP limiter (disabled) -->
<div class="a" style="left:898px;top:799px;width:21px;height:21px;background:#14262b;border-radius:3px"></div>
<svg style="left:898px;top:799px" width="21" height="21" viewBox="-10.5 -10.5 21 21"><path d="M-2.8 -4.2A5.2 5.2 0 1 0 2.8 -4.2" fill="none" stroke="#23404700" stroke-width="1.2"></path><path d="M-2.8 -4.2A5.2 5.2 0 1 0 2.8 -4.2" fill="none" stroke="#234047" stroke-width="1.2" stroke-linecap="round"></path><path d="M0 -6V-0.8" stroke="#234047" stroke-width="1.2" stroke-linecap="round"></path></svg>
<div class="t" style="font-size: 11.8px; color: rgb(30, 55, 61); letter-spacing: 0.31px; left: 929.3px; top: 804.3px;">TP Limiter</div>
<div class="a" style="left:996px;top:799px;width:100px;height:21px;background:#13242a;border-radius:3px"></div>
<div class="t" style="font-size: 11.8px; color: rgb(28, 52, 57); letter-spacing: 0.14px; left: 1001.9px; top: 804.3px;">Stereo</div>
<div class="t" style="font-size: 11.8px; color: rgb(33, 59, 65); letter-spacing: 0.64px; left: 910.6px; top: 834px;">Target</div>
<div class="t" style="font-size: 11.8px; color: rgb(33, 59, 65); letter-spacing: 0.16px; left: 975.5px; top: 834px;">Release</div>
<svg style="left:905px;top:855px" width="48" height="48" viewBox="-24 -24 48 48"><path d="M-14.2 14.2A20.1 20.1 0 1 1 14.2 14.2" fill="none" stroke="#23474e" stroke-width="5.2" stroke-linecap="round"></path><circle cx="20" cy="-2.2" r="1.5" fill="#101b1b"></circle></svg>
<svg style="left:975px;top:855px" width="48" height="48" viewBox="-24 -24 48 48"><path d="M-14.2 14.2A20.1 20.1 0 1 1 14.2 14.2" fill="none" stroke="#23474e" stroke-width="5.2" stroke-linecap="round"></path><circle cx="-19.6" cy="-4.4" r="1.5" fill="#101b1b"></circle></svg>
<div class="t" style="font-size: 10.6px; color: rgb(41, 73, 79); letter-spacing: -0.55px; left: 917.3px; top: 873.1px;">-1 dB</div>
<div class="t" style="font-size: 10.6px; color: rgb(41, 73, 79); letter-spacing: 0.01px; left: 984.6px; top: 873.1px;">20 ms</div>
<div class="a" style="left:1038px;top:848px;width:21px;height:21px;background:#13242a;border-radius:3px"></div>
<svg style="left:1038px;top:848px" width="21" height="21" viewBox="0 0 21 21"><path d="M10.5 5.2L16.4 15H4.6Z" fill="none" stroke="#223f46" stroke-width="1.1" stroke-linejoin="round"></path></svg>
<div class="a" style="left:1076px;top:832px;width:9px;height:48px;background:#1d353b;border-radius:2px"></div>
<div class="a" style="left:1087px;top:832px;width:9px;height:48px;background:#1d353b;border-radius:2px"></div>
<div class="t" style="font-size: 11.6px; color: rgb(41, 73, 79); letter-spacing: 0.29px; left: 1070.4px; top: 884.6px;">0 dB</div>
<div class="a" style="left:896px;top:919px;width:200px;height:2px;background:#1f383e"></div>
<!-- Loudness -->
<div class="t" style="font-size: 11.8px; color: rgb(110, 195, 207); letter-spacing: 0.38px; left: 898.6px; top: 938.6px;">Loudness</div>
<div class="btn" style="left:898px;top:960px;width:100px;height:21px"></div>
<div class="t" style="font-size: 11.8px; color: rgb(242, 166, 196); letter-spacing: -0.55px; left: 903.8px; top: 965.6px;">5.1</div>
<svg style="left:984.8px;top:967.6px" width="8" height="6" viewBox="0 0 8 6"><path d="M1 1.2L4 4.2L7 1.2" fill="none" stroke="#f2a6c4" stroke-width="1.3"></path></svg>
<div class="btn" style="left:1005px;top:960px;width:91px;height:21px"></div>
<div class="t" style="font-size: 11.8px; color: rgb(111, 208, 216); letter-spacing: 0.24px; left: 1026.4px; top: 965.5px;">Measure</div>
<div class="t" style="font-size: 11.8px; color: rgb(110, 195, 207); letter-spacing: 0.91px; left: 897.6px; top: 993.6px;">Integrated:</div>
<div class="t" style="font-size: 11.8px; color: rgb(110, 195, 207); letter-spacing: 0.44px; left: 898.6px; top: 1015.6px;">True peak:</div>
<div class="t" style="font-size: 11.8px; color: rgb(110, 195, 207); letter-spacing: 0.37px; left: 1025.8px; top: 1015.6px;">Range:</div>
<svg style="left:0;top:0" width="1919" height="1051"><path d="M971.2 999.1h4.3m3.2 0h4.3m3 0h4.3M971.2 1021.4h4.3m3.2 0h4.3m3 0h4.3M1075.7 1021.4h4.3m2.7 0h4.3m2.7 0h4.3" stroke="#9fe3e6" stroke-width="1.3"></path></svg>

<!-- dot grid -->
<svg style="left:0;top:0" width="1919" height="1051">
<circle cx="1513.5" cy="805.3" r="5.5" fill="#483a36"></circle>
<circle cx="1530.5" cy="805.3" r="5.5" fill="#483a36"></circle>
<circle cx="1547.5" cy="805.3" r="5.5" fill="#483a36"></circle>
<circle cx="1564.5" cy="805.3" r="5.5" fill="#483a36"></circle>
<circle cx="1581.5" cy="805.3" r="5.5" fill="#483a36"></circle>
<circle cx="1598.5" cy="805.3" r="5.5" fill="#483a36"></circle>
<circle cx="1615.5" cy="805.3" r="5.5" fill="#483a36"></circle>
<circle cx="1632.5" cy="805.3" r="5.5" fill="#483a36"></circle>
<circle cx="1649.5" cy="805.3" r="5.5" fill="#483a36"></circle>
<circle cx="1666.5" cy="805.3" r="5.5" fill="#483a36"></circle>
<circle cx="1513.5" cy="822.3" r="5.5" fill="#25373f"></circle>
<circle cx="1530.5" cy="822.3" r="5.5" fill="#25373f"></circle>
<circle cx="1547.5" cy="822.3" r="5.5" fill="#25373f"></circle>
<circle cx="1564.5" cy="822.3" r="5.5" fill="#25373f"></circle>
<circle cx="1581.5" cy="822.3" r="5.5" fill="#25373f"></circle>
<circle cx="1598.5" cy="822.3" r="5.5" fill="#25373f"></circle>
<circle cx="1615.5" cy="822.3" r="5.5" fill="#25373f"></circle>
<circle cx="1632.5" cy="822.3" r="5.5" fill="#25373f"></circle>
<circle cx="1649.5" cy="822.3" r="5.5" fill="#25373f"></circle>
<circle cx="1666.5" cy="822.3" r="5.5" fill="#25373f"></circle>
<circle cx="1513.5" cy="839.3" r="5.5" fill="#25373f"></circle>
<circle cx="1530.5" cy="839.3" r="5.5" fill="#25373f"></circle>
<circle cx="1547.5" cy="839.3" r="5.5" fill="#25373f"></circle>
<circle cx="1564.5" cy="839.3" r="5.5" fill="#25373f"></circle>
<circle cx="1581.5" cy="839.3" r="5.5" fill="#25373f"></circle>
<circle cx="1598.5" cy="839.3" r="5.5" fill="#25373f"></circle>
<circle cx="1615.5" cy="839.3" r="5.5" fill="#25373f"></circle>
<circle cx="1632.5" cy="839.3" r="5.5" fill="#25373f"></circle>
<circle cx="1649.5" cy="839.3" r="5.5" fill="#25373f"></circle>
<circle cx="1666.5" cy="839.3" r="5.5" fill="#25373f"></circle>
<circle cx="1513.5" cy="856.3" r="5.5" fill="#25373f"></circle>
<circle cx="1530.5" cy="856.3" r="5.5" fill="#25373f"></circle>
<circle cx="1547.5" cy="856.3" r="5.5" fill="#25373f"></circle>
<circle cx="1564.5" cy="856.3" r="5.5" fill="#25373f"></circle>
<circle cx="1581.5" cy="856.3" r="5.5" fill="#25373f"></circle>
<circle cx="1598.5" cy="856.3" r="5.5" fill="#25373f"></circle>
<circle cx="1615.5" cy="856.3" r="5.5" fill="#25373f"></circle>
<circle cx="1632.5" cy="856.3" r="5.5" fill="#25373f"></circle>
<circle cx="1649.5" cy="856.3" r="5.5" fill="#25373f"></circle>
<circle cx="1666.5" cy="856.3" r="5.5" fill="#25373f"></circle>
<circle cx="1513.5" cy="873.3" r="5.5" fill="#25373f"></circle>
<circle cx="1530.5" cy="873.3" r="5.5" fill="#25373f"></circle>
<circle cx="1547.5" cy="873.3" r="5.5" fill="#25373f"></circle>
<circle cx="1564.5" cy="873.3" r="5.5" fill="#25373f"></circle>
<circle cx="1581.5" cy="873.3" r="5.5" fill="#25373f"></circle>
<circle cx="1598.5" cy="873.3" r="5.5" fill="#25373f"></circle>
<circle cx="1615.5" cy="873.3" r="5.5" fill="#25373f"></circle>
<circle cx="1632.5" cy="873.3" r="5.5" fill="#25373f"></circle>
<circle cx="1649.5" cy="873.3" r="5.5" fill="#25373f"></circle>
<circle cx="1666.5" cy="873.3" r="5.5" fill="#25373f"></circle>
<circle cx="1513.5" cy="890.3" r="5.5" fill="#25373f"></circle>
<circle cx="1530.5" cy="890.3" r="5.5" fill="#25373f"></circle>
<circle cx="1547.5" cy="890.3" r="5.5" fill="#25373f"></circle>
<circle cx="1564.5" cy="890.3" r="5.5" fill="#25373f"></circle>
<circle cx="1581.5" cy="890.3" r="5.5" fill="#25373f"></circle>
<circle cx="1598.5" cy="890.3" r="5.5" fill="#25373f"></circle>
<circle cx="1615.5" cy="890.3" r="5.5" fill="#25373f"></circle>
<circle cx="1632.5" cy="890.3" r="5.5" fill="#25373f"></circle>
<circle cx="1649.5" cy="890.3" r="5.5" fill="#25373f"></circle>
<circle cx="1666.5" cy="890.3" r="5.5" fill="#25373f"></circle>
<circle cx="1513.5" cy="907.3" r="5.5" fill="#25373f"></circle>
<circle cx="1530.5" cy="907.3" r="5.5" fill="#25373f"></circle>
<circle cx="1547.5" cy="907.3" r="5.5" fill="#25373f"></circle>
<circle cx="1564.5" cy="907.3" r="5.5" fill="#25373f"></circle>
<circle cx="1581.5" cy="907.3" r="5.5" fill="#25373f"></circle>
<circle cx="1598.5" cy="907.3" r="5.5" fill="#25373f"></circle>
<circle cx="1615.5" cy="907.3" r="5.5" fill="#25373f"></circle>
<circle cx="1632.5" cy="907.3" r="5.5" fill="#25373f"></circle>
<circle cx="1649.5" cy="907.3" r="5.5" fill="#25373f"></circle>
<circle cx="1666.5" cy="907.3" r="5.5" fill="#25373f"></circle>
<circle cx="1513.5" cy="924.3" r="5.5" fill="#25373f"></circle>
<circle cx="1530.5" cy="924.3" r="5.5" fill="#25373f"></circle>
<circle cx="1547.5" cy="924.3" r="5.5" fill="#25373f"></circle>
<circle cx="1564.5" cy="924.3" r="5.5" fill="#25373f"></circle>
<circle cx="1581.5" cy="924.3" r="5.5" fill="#25373f"></circle>
<circle cx="1598.5" cy="924.3" r="5.5" fill="#25373f"></circle>
<circle cx="1615.5" cy="924.3" r="5.5" fill="#25373f"></circle>
<circle cx="1632.5" cy="924.3" r="5.5" fill="#25373f"></circle>
<circle cx="1649.5" cy="924.3" r="5.5" fill="#25373f"></circle>
<circle cx="1666.5" cy="924.3" r="5.5" fill="#25373f"></circle>
<circle cx="1513.5" cy="941.3" r="5.5" fill="#25373f"></circle>
<circle cx="1530.5" cy="941.3" r="5.5" fill="#25373f"></circle>
<circle cx="1547.5" cy="941.3" r="5.5" fill="#25373f"></circle>
<circle cx="1564.5" cy="941.3" r="5.5" fill="#25373f"></circle>
<circle cx="1581.5" cy="941.3" r="5.5" fill="#25373f"></circle>
<circle cx="1598.5" cy="941.3" r="5.5" fill="#25373f"></circle>
<circle cx="1615.5" cy="941.3" r="5.5" fill="#25373f"></circle>
<circle cx="1632.5" cy="941.3" r="5.5" fill="#25373f"></circle>
<circle cx="1649.5" cy="941.3" r="5.5" fill="#25373f"></circle>
<circle cx="1666.5" cy="941.3" r="5.5" fill="#25373f"></circle>
<circle cx="1513.5" cy="958.3" r="5.5" fill="#25373f"></circle>
<circle cx="1530.5" cy="958.3" r="5.5" fill="#25373f"></circle>
<circle cx="1547.5" cy="958.3" r="5.5" fill="#25373f"></circle>
<circle cx="1564.5" cy="958.3" r="5.5" fill="#25373f"></circle>
<circle cx="1581.5" cy="958.3" r="5.5" fill="#25373f"></circle>
<circle cx="1598.5" cy="958.3" r="5.5" fill="#25373f"></circle>
<circle cx="1615.5" cy="958.3" r="5.5" fill="#25373f"></circle>
<circle cx="1632.5" cy="958.3" r="5.5" fill="#25373f"></circle>
<circle cx="1649.5" cy="958.3" r="5.5" fill="#25373f"></circle>
<circle cx="1666.5" cy="958.3" r="5.5" fill="#25373f"></circle>
<circle cx="1513.5" cy="975.3" r="5.5" fill="#25373f"></circle>
<circle cx="1530.5" cy="975.3" r="5.5" fill="#25373f"></circle>
<circle cx="1547.5" cy="975.3" r="5.5" fill="#25373f"></circle>
<circle cx="1564.5" cy="975.3" r="5.5" fill="#25373f"></circle>
<circle cx="1581.5" cy="975.3" r="5.5" fill="#25373f"></circle>
<circle cx="1598.5" cy="975.3" r="5.5" fill="#25373f"></circle>
<circle cx="1615.5" cy="975.3" r="5.5" fill="#25373f"></circle>
<circle cx="1632.5" cy="975.3" r="5.5" fill="#25373f"></circle>
<circle cx="1649.5" cy="975.3" r="5.5" fill="#25373f"></circle>
<circle cx="1666.5" cy="975.3" r="5.5" fill="#25373f"></circle>
<circle cx="1513.5" cy="992.3" r="5.5" fill="#25373f"></circle>
<circle cx="1530.5" cy="992.3" r="5.5" fill="#25373f"></circle>
<circle cx="1547.5" cy="992.3" r="5.5" fill="#25373f"></circle>
<circle cx="1564.5" cy="992.3" r="5.5" fill="#25373f"></circle>
<circle cx="1581.5" cy="992.3" r="5.5" fill="#25373f"></circle>
<circle cx="1598.5" cy="992.3" r="5.5" fill="#25373f"></circle>
<circle cx="1615.5" cy="992.3" r="5.5" fill="#25373f"></circle>
<circle cx="1632.5" cy="992.3" r="5.5" fill="#30383c"></circle>
<circle cx="1649.5" cy="992.3" r="5.5" fill="#30383c"></circle>
<circle cx="1666.5" cy="992.3" r="5.5" fill="#30383c"></circle>
<circle cx="1513.5" cy="1009.3" r="5.5" fill="#25373f"></circle>
<circle cx="1530.5" cy="1009.3" r="5.5" fill="#25373f"></circle>
<circle cx="1547.5" cy="1009.3" r="5.5" fill="#25373f"></circle>
<circle cx="1564.5" cy="1009.3" r="5.5" fill="#25373f"></circle>
<circle cx="1581.5" cy="1009.3" r="5.5" fill="#25373f"></circle>
<circle cx="1598.5" cy="1009.3" r="5.5" fill="#25373f"></circle>
<circle cx="1615.5" cy="1009.3" r="5.5" fill="#25373f"></circle>
<circle cx="1632.5" cy="1009.3" r="5.5" fill="#25373f"></circle>
</svg>
<svg style="left:1539.2px;top:1029.2px" width="16.6" height="10.8" viewBox="0 0 16.6 10.8"><path d="M0 0H2.3A5.4 5.4 0 0 1 2.3 10.8H0Z M16.6 0H14.3A5.4 5.4 0 0 0 14.3 10.8H16.6Z" fill="#f4f6f6"></path></svg>
<div class="t" style="font-size: 14.4px; color: rgb(244, 246, 246); font-weight: bold; letter-spacing: -0.55px; left: 1558.3px; top: 1027.1px;">Dolby</div>
<div class="t" style="font-size: 14.4px; color: rgb(228, 232, 232); letter-spacing: 0.13px; left: 1599.7px; top: 1027.1px;">Atmos</div>
<div class="a" style="left:1697px;top:799px;width:201px;height:220px;border:2px solid #233a40;border-radius:7px;background:#141f22"></div>
<svg style="left:0;top:0" width="1919" height="1051">
<path d="M1713.5 840.7L1832.3 829.1L1877.4 855.6L1766.2 865.5Z" fill="#1a2e34"></path>
<path d="M1713.5 840.7L1766.2 865.5V981.8L1713.5 967Z" fill="#21393f"></path>
<path d="M1766.2 865.5L1877.4 855.6L1878.1 975.6L1766.2 981.8Z" fill="#294a51"></path>
<path d="M1791 905C1791 899.8 1795 897.7 1799.5 897.7C1804.6 897.7 1808 901 1807.8 906L1809.2 911L1807.6 912.8L1808 916L1806 918.6L1802 919.6L1797 917.6L1792.4 914.4C1791.4 911 1791 908 1791 905Z" fill="#d3d7d7"></path>
<path d="M1793 913.5L1797 917.6L1802 919.6L1806 918.6L1807.5 915.5C1803 917.5 1797 916 1793 913.5Z" fill="#b9c3c4"></path>
<path d="M1800 898.5C1805 899 1807.6 902 1807.6 906L1804.5 905.5C1804 902 1802.5 900 1800 898.5Z" fill="#c2c6c8"></path>
<path d="M1786.6 909.9L1791 910.6" stroke="#13262a" stroke-width="1.5"></path>
<path d="M1786.4 908.4L1791.5 907.4L1797.2 907.6" stroke="#eef2f2" stroke-width="1.3" fill="none"></path>
<path d="M1796.4 906.2V908.8M1795.6 910.6L1796.8 911.4" stroke="#3a3f42" stroke-width="0.9"></path>
<path d="M1805.6 905.2L1808.6 906.2" stroke="#0f1c1f" stroke-width="1.3"></path>
<path d="M1805.9 906.8L1809.5 907.8L1809.8 911.4L1806.8 910.4Z" fill="#eef4f5"></path>
<path d="M1806.5 913.4L1808 914.2" stroke="#7d6f78" stroke-width="0.9"></path>
</svg>
<div class="a" style="left:1867px;top:809px;width:21px;height:21px;background:#1e353b;border-radius:3px"></div>
<svg style="left:1867px;top:809px" width="21" height="21" viewBox="0 0 21 21"><path d="M5.5 5.2L15.5 15.2M15.5 5.2L5.5 15.2" stroke="#74dce8" stroke-width="1.5"></path><path d="M4.2 3.9H9.6L4.2 9.3Z M16.8 3.9H11.4L16.8 9.3Z M4.2 16.4H9.6L4.2 11Z M16.8 16.4H11.4L16.8 11Z" fill="#74dce8"></path></svg>
<div class="t" style="font-size: 12.4px; background: linear-gradient(90deg, rgb(63, 147, 182), rgb(79, 168, 154)) text; color: transparent; letter-spacing: 1.14px; left: 1757px; top: 1029.1px;">fiedler audio</div>

<!-- edges -->
<div class="a" style="left:0;top:0;width:1px;height:1041px;background:#4e5a5a"></div>
<div class="a" style="left:1px;top:0;width:1px;height:1041px;background:#1a2426"></div>
<div class="a" style="left:0;top:157px;width:1.5px;height:575px;background:#f4f6f6"></div>
<div class="a" style="left:0;top:0;width:1919px;height:1px;background:#020405"></div>
<div class="a" style="left:0;top:1px;width:1919px;height:1px;background:#0a1011;opacity:.6"></div>
<!-- window corners -->
<svg style="left:0;top:1040px" width="12" height="11" viewBox="0 0 12 11"><path d="M0 0V11H11.5A11.5 11 0 0 1 0 0Z" fill="#020405"></path><path d="M0.5 0A11 10.5 0 0 0 11.5 10.5" fill="none" stroke="#4a5656" stroke-width="1"></path></svg>
<svg style="left:1907px;top:1040px" width="12" height="11" viewBox="0 0 12 11"><path d="M12 0V11H0.5A11.5 11 0 0 0 12 0Z" fill="#020405"></path><path d="M11.8 0A11.3 10.5 0 0 1 0.5 10.5" fill="none" stroke="#3a4646" stroke-width="1"></path></svg>
</div>
</body></html>
